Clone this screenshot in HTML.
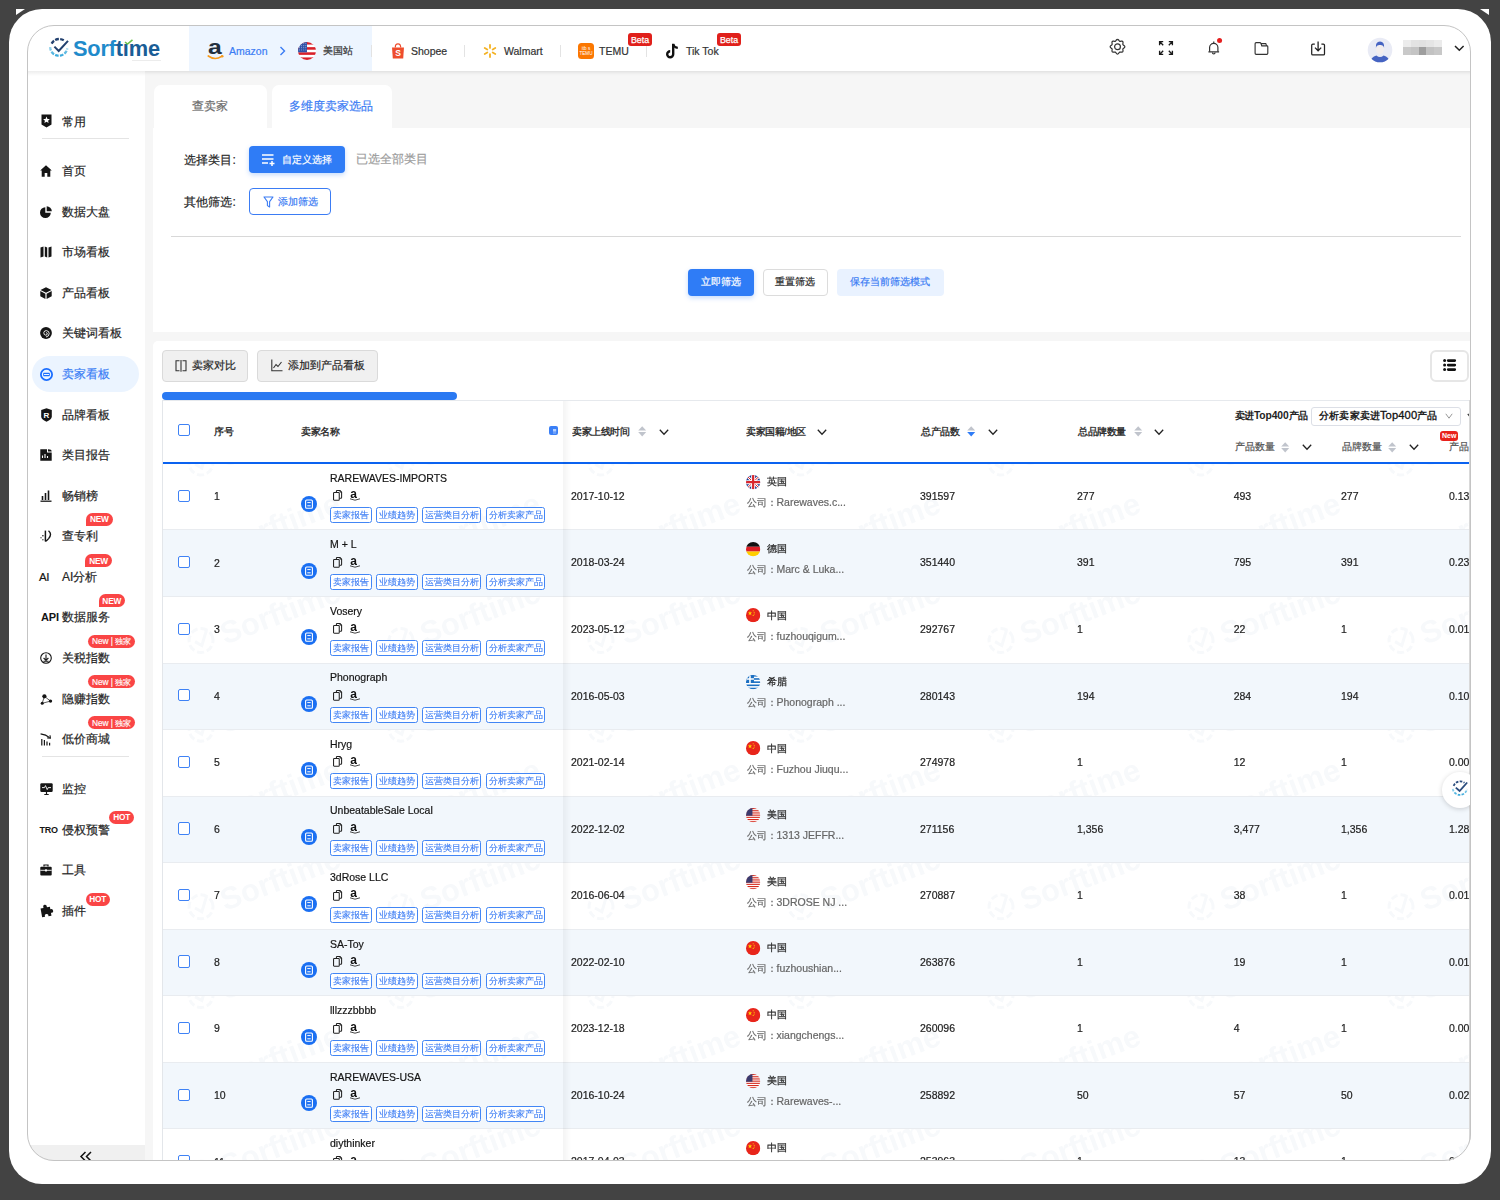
<!DOCTYPE html><html><head><meta charset="utf-8"><style>
*{box-sizing:border-box}
html,body{margin:0;padding:0}
body{width:1500px;height:1200px;background:#434343;position:relative;overflow:hidden;font-family:"Liberation Sans",sans-serif}
.frame{position:absolute;left:9px;top:9px;width:1482px;height:1175px;background:#fff;border-radius:33px}
.clip{position:absolute;left:0;top:0;width:1500px;height:1200px;clip-path:inset(25px 29px 39px 27px round 27px);background:#f6f6f6}
.bord{position:absolute;left:27px;top:25px;width:1444px;height:1136px;border:1px solid #c4c4c4;border-radius:27px;pointer-events:none}
.a{position:absolute}
.t{position:absolute;white-space:nowrap;line-height:14px;-webkit-text-stroke:0.2px currentColor}
svg{position:absolute;overflow:visible}
</style></head><body>
<div class="frame"></div>
<svg style="left:0;top:0" width="1500" height="40"><path d="M16 9 H25 L16 15 Z" fill="#fff"/><path d="M1480 9 H1489 V15 Z" fill="#fff"/></svg>
<div class="clip">
<div class="a" style="left:0px;top:0px;width:1500px;height:71px;background:#fff;box-shadow:0 1px 4px rgba(0,0,0,0.12)"></div>
<div class="a" style="left:189px;top:0px;width:183px;height:71px;background:#edf5ff"></div>
<svg style="left:48px;top:36px" width="22" height="24" viewBox="0 0 22 24">
<defs><linearGradient id="lg1" x1="0" y1="0" x2="0" y2="1"><stop offset="0" stop-color="#9fd6ec"/><stop offset="1" stop-color="#39a9dc"/></linearGradient></defs>
<path d="M3.6 7.6 A8.6 8.6 0 0 1 16.2 4.6" fill="none" stroke="#23416f" stroke-width="2.3" stroke-dasharray="3.8 1.3"/>
<path d="M2.2 11 A8.6 8.6 0 0 0 19.3 12.4" fill="none" stroke="url(#lg1)" stroke-width="2.3" stroke-dasharray="3.6 1.3"/>
<path d="M6.4 10.6 L10.7 15 L20 4.8" fill="none" stroke="#23416f" stroke-width="2" stroke-linecap="butt"/>
</svg>
<div class="t" style="left:73px;top:36px;font-size:21.8px;line-height:26px;color:#333;font-weight:bold;-webkit-text-stroke:0;letter-spacing:-0.2px"><span style="color:#1f8bcb">Sorf</span><span style="color:#1a5d96">t&#305;me</span></div>
<svg style="left:123.5px;top:38.8px" width="9" height="6" viewBox="0 0 9 6"><path d="M1 3 L3.5 5 L8.5 0.8" fill="none" stroke="#6cc04a" stroke-width="1.6"/></svg>
<div class="a" style="left:132px;top:59.6px;width:29px;height:1.3px;background:#ececec"></div>
<div class="t" style="left:207.6px;top:37.3px;font-size:21px;line-height:20px;color:#232f3e;font-weight:bold;-webkit-text-stroke:0;transform:scaleX(1.18);transform-origin:0 0">a</div>
<svg style="left:206px;top:54px" width="19" height="7" viewBox="0 0 19 7"><path d="M2.3 2 Q9 6.8 15.6 2.4" fill="none" stroke="#f79a1c" stroke-width="1.7" stroke-linecap="round"/><circle cx="16.2" cy="2.2" r="1.3" fill="#f79a1c"/></svg>
<div class="t" style="left:229px;top:44px;font-size:10.5px;line-height:14px;color:#3b7cf4;font-weight:normal;">Amazon</div>
<svg style="left:279px;top:46px" width="8" height="10" viewBox="0 0 8 10"><path d="M1.5 1 L5.5 5 L1.5 9" fill="none" stroke="#3b7cf4" stroke-width="1.4"/></svg>
<svg style="left:298px;top:42px" width="18" height="18" viewBox="0 0 18 18"><clipPath id="cUSh"><circle cx="9.0" cy="9.0" r="9.0"/></clipPath><g clip-path="url(#cUSh)"><rect width="18" height="18" fill="#fff"/><rect y="0.00" width="18" height="2.57" fill="#d8202a"/><rect y="5.14" width="18" height="2.57" fill="#d8202a"/><rect y="10.29" width="18" height="2.57" fill="#d8202a"/><rect y="15.43" width="18" height="2.57" fill="#d8202a"/><rect width="9.00" height="10.29" fill="#2f52a8"/><circle cx="1.60" cy="1.60" r="0.45" fill="#fff"/><circle cx="1.60" cy="3.70" r="0.45" fill="#fff"/><circle cx="1.60" cy="5.80" r="0.45" fill="#fff"/><circle cx="1.60" cy="7.90" r="0.45" fill="#fff"/><circle cx="3.70" cy="1.60" r="0.45" fill="#fff"/><circle cx="3.70" cy="3.70" r="0.45" fill="#fff"/><circle cx="3.70" cy="5.80" r="0.45" fill="#fff"/><circle cx="3.70" cy="7.90" r="0.45" fill="#fff"/><circle cx="5.80" cy="1.60" r="0.45" fill="#fff"/><circle cx="5.80" cy="3.70" r="0.45" fill="#fff"/><circle cx="5.80" cy="5.80" r="0.45" fill="#fff"/><circle cx="5.80" cy="7.90" r="0.45" fill="#fff"/><circle cx="7.90" cy="1.60" r="0.45" fill="#fff"/><circle cx="7.90" cy="3.70" r="0.45" fill="#fff"/><circle cx="7.90" cy="5.80" r="0.45" fill="#fff"/><circle cx="7.90" cy="7.90" r="0.45" fill="#fff"/></g></svg>
<div class="t" style="left:322.5px;top:44px;font-size:10px;line-height:14px;color:#333;font-weight:normal;">美国站</div>
<div class="a" style="left:371px;top:45px;width:1px;height:12px;background:#e3e3e3"></div>
<div class="a" style="left:463.5px;top:45px;width:1px;height:12px;background:#e3e3e3"></div>
<div class="a" style="left:559.6px;top:45px;width:1px;height:12px;background:#e3e3e3"></div>
<div class="a" style="left:646px;top:45px;width:1px;height:12px;background:#e3e3e3"></div>
<svg style="left:391px;top:43px" width="14" height="16" viewBox="0 0 14 16"><path d="M1 4.5 H13 L12.2 15.5 H1.8 Z" fill="#ee4d2d"/><path d="M4.3 4.5 Q4.3 0.8 7 0.8 Q9.7 0.8 9.7 4.5" fill="none" stroke="#ee4d2d" stroke-width="1.2"/><text x="7" y="13.2" font-size="8.5" font-family="Liberation Sans" font-weight="bold" fill="#fff" text-anchor="middle">S</text></svg>
<div class="t" style="left:411px;top:44px;font-size:10.5px;line-height:14px;color:#333;font-weight:normal;">Shopee</div>
<svg style="left:483px;top:44px" width="14" height="14" viewBox="0 0 14 14"><rect x="6.1" y="0" width="1.8" height="4.8" rx="0.9" fill="#f4b223" transform="rotate(0 7 7)"/><rect x="6.1" y="0" width="1.8" height="4.8" rx="0.9" fill="#f4b223" transform="rotate(60 7 7)"/><rect x="6.1" y="0" width="1.8" height="4.8" rx="0.9" fill="#f4b223" transform="rotate(120 7 7)"/><rect x="6.1" y="0" width="1.8" height="4.8" rx="0.9" fill="#f4b223" transform="rotate(180 7 7)"/><rect x="6.1" y="0" width="1.8" height="4.8" rx="0.9" fill="#f4b223" transform="rotate(240 7 7)"/><rect x="6.1" y="0" width="1.8" height="4.8" rx="0.9" fill="#f4b223" transform="rotate(300 7 7)"/></svg>
<div class="t" style="left:504px;top:44px;font-size:10.5px;line-height:14px;color:#333;font-weight:normal;">Walmart</div>
<svg style="left:578px;top:43px" width="16" height="16" viewBox="0 0 16 16"><rect width="16" height="16" rx="3.5" fill="#fb7701"/><text x="8" y="7.2" font-size="4.6" font-family="Liberation Sans" fill="#fff" text-anchor="middle">itb s</text><text x="8" y="12" font-size="4.6" font-family="Liberation Sans" fill="#fff" text-anchor="middle">TEMU</text></svg>
<div class="t" style="left:599px;top:44px;font-size:10.5px;line-height:14px;color:#333;font-weight:normal;">TEMU</div>
<div class="a" style="left:628px;top:33px;width:24px;height:12.7px;background:#e0201b;border-radius:3px"></div>
<div class="t" style="left:628px;top:32.5px;font-size:8.8px;line-height:14px;color:#fff;font-weight:normal;width:24px;text-align:center;-webkit-text-stroke:0.25px #fff">Beta</div>
<svg style="left:665px;top:43px" width="15" height="16" viewBox="0 0 15 16"><path d="M8.2 0.8 V11.2 A3 3 0 1 1 5.2 8.2" fill="none" stroke="#111" stroke-width="2.4"/><path d="M8.2 1.2 Q9 4.4 12.8 4.8" fill="none" stroke="#111" stroke-width="2.2"/></svg>
<div class="t" style="left:686px;top:44px;font-size:10.5px;line-height:14px;color:#333;font-weight:normal;">Tik Tok</div>
<div class="a" style="left:717px;top:33px;width:24px;height:12.7px;background:#e0201b;border-radius:3px"></div>
<div class="t" style="left:717px;top:32.5px;font-size:8.8px;line-height:14px;color:#fff;font-weight:normal;width:24px;text-align:center;-webkit-text-stroke:0.25px #fff">Beta</div>
<svg style="left:1110px;top:39px" width="16" height="16" viewBox="0 0 16 16"><polyline points="7.50,0.35 8.20,0.60 8.79,1.23 9.26,1.89 9.74,2.30 10.36,2.35 11.17,2.21 12.02,2.19 12.70,2.50 13.01,3.18 12.99,4.03 12.85,4.84 12.90,5.46 13.31,5.94 13.97,6.41 14.60,7.00 14.85,7.70 14.60,8.40 13.97,8.99 13.31,9.46 12.90,9.94 12.85,10.56 12.99,11.37 13.01,12.22 12.70,12.90 12.02,13.21 11.17,13.19 10.36,13.05 9.74,13.10 9.26,13.51 8.79,14.17 8.20,14.80 7.50,15.05 6.80,14.80 6.21,14.17 5.74,13.51 5.26,13.10 4.64,13.05 3.83,13.19 2.98,13.21 2.30,12.90 1.99,12.22 2.01,11.37 2.15,10.56 2.10,9.94 1.69,9.46 1.03,8.99 0.40,8.40 0.15,7.70 0.40,7.00 1.03,6.41 1.69,5.94 2.10,5.46 2.15,4.84 2.01,4.03 1.99,3.18 2.30,2.50 2.98,2.19 3.83,2.21 4.64,2.35 5.26,2.30 5.74,1.89 6.21,1.23 6.80,0.60 7.50,0.35" fill="none" stroke="#333" stroke-width="1.2"/><circle cx="7.5" cy="7.7" r="2.9" fill="none" stroke="#333" stroke-width="1.2"/></svg>
<svg style="left:1158.5px;top:41px" width="14" height="14" viewBox="0 0 14 14"><path d="M0.6 4.2 V0.6 H4.2 M0.6 0.6 L4.2 4.2 M9.8 0.6 H13.4 V4.2 M13.4 0.6 L9.8 4.2 M0.6 9.8 V13.4 H4.2 M0.6 13.4 L4.2 9.8 M13.4 9.8 V13.4 H9.8 M13.4 13.4 L9.8 9.8" fill="none" stroke="#1a1a1a" stroke-width="1.35"/></svg>
<svg style="left:1208px;top:40.5px" width="11.5" height="14.5" viewBox="0 0 11.5 14.5"><path d="M1.6 10.8 V6.5 A4.15 4.15 0 0 1 9.9 6.5 V10.8" fill="none" stroke="#333" stroke-width="1.2"/><path d="M0.4 10.9 H11.1" stroke="#333" stroke-width="1.3"/><path d="M4.4 11.6 A1.35 1.35 0 0 0 7.1 11.6" fill="none" stroke="#333" stroke-width="1.1"/><path d="M5.75 0.4 V2.4" stroke="#333" stroke-width="1.2"/></svg>
<svg style="left:1216.5px;top:37.6px" width="5" height="5" viewBox="0 0 5 5"><circle cx="2.55" cy="2.6" r="2.5" fill="#e41e1e"/></svg>
<svg style="left:1254px;top:41.5px" width="15" height="13" viewBox="0 0 15 13"><path d="M1.1 1.7 Q1.1 0.6 2.2 0.6 H5.9 Q6.6 0.6 6.9 1.3 L7.8 3.9 H13 Q13.8 3.9 13.8 4.8 V11.3 Q13.8 12.3 12.8 12.3 H2.1 Q1.1 12.3 1.1 11.3 Z" fill="none" stroke="#333" stroke-width="1.15"/><path d="M6.9 1.6 H11.8 L12.6 3.9" fill="none" stroke="#333" stroke-width="1.1"/></svg>
<svg style="left:1311px;top:40.5px" width="15" height="15" viewBox="0 0 15 15"><path d="M3.8 3 H1.9 Q0.7 3 0.7 4.2 V12.9 Q0.7 13.9 1.9 13.9 H12.4 Q13.5 13.9 13.5 12.9 V4.2 Q13.5 3 12.4 3 H10.4" fill="none" stroke="#222" stroke-width="1.25"/><path d="M7.1 0.4 V9.6 M4 6.6 L7.1 9.8 L10.2 6.6" fill="none" stroke="#222" stroke-width="1.3"/></svg>
<svg style="left:1367px;top:37px" width="26" height="26" viewBox="0 0 26 26"><clipPath id="cav"><circle cx="13" cy="13" r="12.3"/></clipPath><circle cx="13" cy="13" r="12.3" fill="#e9ebf5"/>
<g clip-path="url(#cav)"><ellipse cx="13" cy="12.3" rx="3.9" ry="4.9" fill="#f2eded"/><path d="M8.9 11 Q8.3 4.6 13 4.5 Q17.7 4.6 17.1 11 Q16.6 7.8 13 8 Q9.4 7.8 8.9 11Z" fill="#4563c2"/>
<path d="M3 27 Q3.5 19.8 9.4 18.6 Q13 21.6 16.6 18.6 Q22.5 19.8 23 27 Z" fill="#4563c2"/></g></svg>
<div class="a" style="left:1403.0px;top:40px;width:7.8px;height:7px;background:#ececec"></div>
<div class="a" style="left:1403.0px;top:47px;width:7.8px;height:7.5px;background:#c9c9c9"></div>
<div class="a" style="left:1410.8px;top:40px;width:7.8px;height:7px;background:#e3e3e3"></div>
<div class="a" style="left:1410.8px;top:47px;width:7.8px;height:7.5px;background:#c4c4c4"></div>
<div class="a" style="left:1418.6px;top:40px;width:7.8px;height:7px;background:#e1e1e1"></div>
<div class="a" style="left:1418.6px;top:47px;width:7.8px;height:7.5px;background:#9e9e9e"></div>
<div class="a" style="left:1426.4px;top:40px;width:7.8px;height:7px;background:#e5e5e5"></div>
<div class="a" style="left:1426.4px;top:47px;width:7.8px;height:7.5px;background:#c2c2c2"></div>
<div class="a" style="left:1434.2px;top:40px;width:7.8px;height:7px;background:#ebebeb"></div>
<div class="a" style="left:1434.2px;top:47px;width:7.8px;height:7.5px;background:#c8c8c8"></div>
<svg style="left:1454px;top:45px" width="11" height="7" viewBox="0 0 11 7"><path d="M1 1 L5.3 5.3 L9.6 1" fill="none" stroke="#222" stroke-width="1.5"/></svg>
<div class="a" style="left:0px;top:71px;width:145px;height:1129px;background:#fff"></div>
<div class="a" style="left:0px;top:1145px;width:145px;height:20px;background:#f0f0f0"></div>
<div class="a" style="left:0px;top:71px;width:145px;height:5px;background:linear-gradient(rgba(0,0,0,0.07),rgba(0,0,0,0))"></div>
<svg style="left:79px;top:1151px" width="14" height="10" viewBox="0 0 14 10"><path d="M6.5 1 L2 5.5 L6.5 10 M12 1 L7.5 5.5 L12 10" fill="none" stroke="#111" stroke-width="1.5"/></svg>
<div class="a" style="left:42px;top:137.5px;width:87px;height:1px;background:#e4e4e4"></div>
<div class="a" style="left:42px;top:756px;width:87px;height:1px;background:#e4e4e4"></div>
<div class="a" style="left:32px;top:356px;width:107px;height:36px;background:#ebf4ff;border-radius:18px"></div>
<div class="t" style="left:62px;top:114.7px;font-size:12px;line-height:14px;color:#262626;font-weight:normal;">常用</div>
<svg style="left:40.5px;top:114.2px" width="11" height="14" viewBox="0 0 11 14"><path d="M0.5 0.5 H10.5 V10.5 L5.5 13.5 L0.5 10.5 Z" fill="#151515"/><path d="M5.5 2.6 L6.5 4.9 L8.9 5.1 L7.1 6.7 L7.6 9.1 L5.5 7.8 L3.4 9.1 L3.9 6.7 L2.1 5.1 L4.5 4.9 Z" fill="#fff"/></svg>
<div class="t" style="left:62px;top:164.25px;font-size:12px;line-height:14px;color:#262626;font-weight:normal;">首页</div>
<svg style="left:40px;top:165.25px" width="12" height="12" viewBox="0 0 12 12"><path d="M6 0.3 L11.8 5.6 H10.3 V11.7 H7.3 V8 H4.7 V11.7 H1.7 V5.6 H0.2 Z" fill="#151515"/></svg>
<div class="t" style="left:62px;top:204.81px;font-size:12px;line-height:14px;color:#262626;font-weight:normal;">数据大盘</div>
<svg style="left:40px;top:205.81px" width="12" height="12" viewBox="0 0 12 12"><path d="M5.3 1.2 A5.4 5.4 0 1 0 10.8 6.7 H5.3 Z" fill="#151515"/><path d="M6.7 0.2 A5.3 5.3 0 0 1 11.8 5.3 H6.7 Z" fill="#151515"/></svg>
<div class="t" style="left:62px;top:245.37px;font-size:12px;line-height:14px;color:#262626;font-weight:normal;">市场看板</div>
<svg style="left:40px;top:246.37px" width="12" height="12" viewBox="0 0 12 12"><path d="M0.5 1.5 L3.5 0.5 V10.5 L0.5 11.5 Z M4.8 0.5 L7.2 1.5 V11.5 L4.8 10.5 Z M8.5 1.5 L11.5 0.5 V10.5 L8.5 11.5 Z" fill="#151515"/></svg>
<div class="t" style="left:62px;top:285.93px;font-size:12px;line-height:14px;color:#262626;font-weight:normal;">产品看板</div>
<svg style="left:40px;top:286.93px" width="12" height="12" viewBox="0 0 12 12"><path d="M6 0.3 L11.5 3 L6 5.8 L0.5 3 Z" fill="#151515"/><path d="M0.3 4 L5.4 6.7 V11.9 L0.3 9.2 Z M11.7 4 L6.6 6.7 V11.9 L11.7 9.2 Z" fill="#151515"/></svg>
<div class="t" style="left:62px;top:326.49px;font-size:12px;line-height:14px;color:#262626;font-weight:normal;">关键词看板</div>
<svg style="left:40px;top:327.49px" width="12" height="12" viewBox="0 0 12 12"><circle cx="6" cy="6" r="5.9" fill="#151515"/><path d="M6 6.2 Q6.6 5.2 7.2 6.2 Q7.6 8 5.8 8.2 Q3.6 8 3.8 5.6 Q4.2 3.4 6.4 3.6 Q9.2 4 9.2 6.6 Q9 9.6 6 10" fill="none" stroke="#fff" stroke-width="0.9"/></svg>
<div class="t" style="left:62px;top:367.05px;font-size:12px;line-height:14px;color:#3a7df5;font-weight:normal;">卖家看板</div>
<svg style="left:40px;top:367.75px" width="13" height="13" viewBox="0 0 13 13"><circle cx="6.5" cy="6.5" r="5.6" fill="none" stroke="#1a6dff" stroke-width="1.8"/><rect x="3.2" y="4.8" width="6.6" height="3.4" rx="0.6" fill="#1a6dff"/><rect x="4" y="6" width="5" height="1" fill="#ebf4ff"/></svg>
<div class="t" style="left:62px;top:407.61px;font-size:12px;line-height:14px;color:#262626;font-weight:normal;">品牌看板</div>
<svg style="left:40.5px;top:407.61px" width="11" height="14" viewBox="0 0 11 14"><path d="M5.5 0.3 L10.8 2 V8.5 Q10.8 11.5 5.5 13.7 Q0.2 11.5 0.2 8.5 V2 Z" fill="#151515"/><text x="5.5" y="10.2" font-size="8" font-weight="bold" font-family="Liberation Sans" fill="#fff" text-anchor="middle">R</text></svg>
<div class="t" style="left:62px;top:448.17px;font-size:12px;line-height:14px;color:#262626;font-weight:normal;">类目报告</div>
<svg style="left:40px;top:449.17px" width="12" height="12" viewBox="0 0 12 12"><path d="M0.3 0.3 H7 V3.5 H11.7 V11.7 H0.3 Z" fill="#151515"/><path d="M8 0.3 Q11.7 0.3 11.7 2.6 H8 Z" fill="#151515"/><path d="M2.5 9 V6.5 M5 9 V5 M7.5 9 V7" stroke="#fff" stroke-width="1.1"/></svg>
<div class="t" style="left:62px;top:488.73px;font-size:12px;line-height:14px;color:#262626;font-weight:normal;">畅销榜</div>
<svg style="left:40px;top:489.73px" width="12" height="12" viewBox="0 0 12 12"><path d="M0.5 11.2 H11.5" stroke="#151515" stroke-width="1.3"/><path d="M2.5 10 V6 M5.5 10 V3 M8.5 10 V0.5" stroke="#151515" stroke-width="1.6"/></svg>
<div class="t" style="left:62px;top:529.29px;font-size:12px;line-height:14px;color:#262626;font-weight:normal;">查专利</div>
<svg style="left:39.5px;top:530.29px" width="14" height="12" viewBox="0 0 14 12"><path d="M5.4 0.6 V11.4" stroke="#151515" stroke-width="1.5"/><path d="M8.5 0.8 Q12.5 4 8.6 8.6 Q7 10.4 5.4 11.4" fill="none" stroke="#151515" stroke-width="1.4"/><circle cx="2.9" cy="5.7" r="0.8" fill="#151515"/><circle cx="1" cy="7.8" r="0.75" fill="#151515" opacity="0.7"/><circle cx="2.9" cy="9.8" r="0.75" fill="#151515" opacity="0.8"/></svg>
<div class="t" style="left:62px;top:569.85px;font-size:12px;line-height:14px;color:#262626;font-weight:normal;">AI分析</div>
<div class="t" style="left:39px;top:569.85px;font-size:11.5px;line-height:14px;color:#151515;font-weight:normal;letter-spacing:-0.5px">AI</div>
<div class="t" style="left:62px;top:610.41px;font-size:12px;line-height:14px;color:#262626;font-weight:normal;margin-left:0">数据服务</div>
<div class="t" style="left:41px;top:610.41px;font-size:11px;line-height:14px;color:#151515;font-weight:bold;-webkit-text-stroke:0;letter-spacing:-0.2px">API</div>
<div class="t" style="left:62px;top:650.97px;font-size:12px;line-height:14px;color:#262626;font-weight:normal;">关税指数</div>
<svg style="left:40px;top:651.97px" width="12" height="12" viewBox="0 0 12 12"><circle cx="6" cy="6" r="5.3" fill="none" stroke="#151515" stroke-width="1.1"/><path d="M6 2.5 V8 M3.6 6 L6 8.3 L8.4 6 M3.5 9.3 H8.5" fill="none" stroke="#151515" stroke-width="1.1"/></svg>
<div class="t" style="left:62px;top:691.53px;font-size:12px;line-height:14px;color:#262626;font-weight:normal;">隐赚指数</div>
<svg style="left:39.5px;top:692.03px" width="13" height="13" viewBox="0 0 13 13"><path d="M4.4 4.3 L2.2 11.3 L10.5 9.1 Z" fill="none" stroke="#151515" stroke-width="0.7"/><circle cx="4.4" cy="4.3" r="2.1" fill="#151515"/><circle cx="2.2" cy="11.3" r="1.5" fill="#151515"/><circle cx="10.5" cy="9.1" r="1.7" fill="#151515"/></svg>
<div class="t" style="left:62px;top:732.09px;font-size:12px;line-height:14px;color:#262626;font-weight:normal;">低价商城</div>
<svg style="left:40px;top:733.09px" width="12" height="13" viewBox="0 0 12 13"><path d="M1.8 12.5 V6 M4.4 12.5 V7 M7 12.5 V8.5 M9.6 12.5 V9.8" stroke="#151515" stroke-width="1.2"/><path d="M0.6 0.8 Q6 1.4 9.6 4.6" fill="none" stroke="#151515" stroke-width="1.2"/><path d="M7.2 4.9 L10.4 5.2 L10 2.2" fill="none" stroke="#151515" stroke-width="1.1"/></svg>
<div class="t" style="left:62px;top:782.1px;font-size:12px;line-height:14px;color:#262626;font-weight:normal;">监控</div>
<svg style="left:39.5px;top:783.1px" width="13" height="12" viewBox="0 0 13 12"><rect x="0.3" y="0.3" width="12.4" height="8.6" rx="1.2" fill="#151515"/><path d="M4.3 11.5 H8.7 M6.5 9 V11.5" stroke="#151515" stroke-width="1.2"/><path d="M2 4.6 H4.5 L5.5 2.6 L7.2 6.6 L8.2 4.6 H11" fill="none" stroke="#fff" stroke-width="0.9"/></svg>
<div class="t" style="left:62px;top:822.66px;font-size:12px;line-height:14px;color:#262626;font-weight:normal;">侵权预警</div>
<div class="t" style="left:39.5px;top:822.66px;font-size:9px;line-height:14px;color:#151515;font-weight:bold;-webkit-text-stroke:0;letter-spacing:-0.3px">TRO</div>
<div class="t" style="left:62px;top:863.22px;font-size:12px;line-height:14px;color:#262626;font-weight:normal;">工具</div>
<svg style="left:40px;top:864.22px" width="12" height="12" viewBox="0 0 12 12"><path d="M4 2.5 V1 H8 V2.5" fill="none" stroke="#151515" stroke-width="1.2"/><rect x="0.3" y="2.8" width="11.4" height="8.7" rx="1" fill="#151515"/><path d="M0.3 6.3 H11.7" stroke="#fff" stroke-width="0.9"/><rect x="5" y="5.4" width="2" height="2" fill="#fff"/></svg>
<div class="t" style="left:62px;top:903.78px;font-size:12px;line-height:14px;color:#262626;font-weight:normal;">插件</div>
<svg style="left:40px;top:904.28px" width="13" height="13" viewBox="0 0 13 13"><path d="M1 3.5 H4 Q3.5 0.5 5.8 0.5 Q8 0.5 7.5 3.5 H10.5 V6 Q13 5.5 13 7.8 Q13 10 10.5 9.5 V12.5 H7.5 Q8 10 5.8 10 Q3.5 10 4 12.5 H1 Z" fill="#151515" transform="rotate(-10 6.5 6.5)"/></svg>
<div class="a" style="left:86px;top:513px;width:26.7px;height:12.9px;background:#fa4545;border-radius:6.45px 6.45px 6.45px 0"></div>
<div class="t" style="left:86px;top:512.45px;font-size:8.3px;line-height:14px;color:#fff;font-weight:bold;-webkit-text-stroke:0;width:26.7px;text-align:center;letter-spacing:-0.2px">NEW</div>
<div class="a" style="left:85.2px;top:554.2px;width:26.7px;height:12.9px;background:#fa4545;border-radius:6.45px 6.45px 6.45px 0"></div>
<div class="t" style="left:85.2px;top:553.6500000000001px;font-size:8.3px;line-height:14px;color:#fff;font-weight:bold;-webkit-text-stroke:0;width:26.7px;text-align:center;letter-spacing:-0.2px">NEW</div>
<div class="a" style="left:98.5px;top:594.3px;width:26.5px;height:12.9px;background:#fa4545;border-radius:6.45px 6.45px 6.45px 0"></div>
<div class="t" style="left:98.5px;top:593.75px;font-size:8.3px;line-height:14px;color:#fff;font-weight:bold;-webkit-text-stroke:0;width:26.5px;text-align:center;letter-spacing:-0.2px">NEW</div>
<div class="a" style="left:87.8px;top:634.8px;width:47.4px;height:13px;background:#fa4545;border-radius:6.5px"></div>
<div class="t" style="left:87.8px;top:634.3px;font-size:8.4px;line-height:14px;color:#fff;font-weight:normal;width:47.4px;text-align:center;letter-spacing:-0.1px;-webkit-text-stroke:0.15px #fff">New | 独家</div>
<div class="a" style="left:87.8px;top:675.4px;width:47.4px;height:13px;background:#fa4545;border-radius:6.5px"></div>
<div class="t" style="left:87.8px;top:674.9px;font-size:8.4px;line-height:14px;color:#fff;font-weight:normal;width:47.4px;text-align:center;letter-spacing:-0.1px;-webkit-text-stroke:0.15px #fff">New | 独家</div>
<div class="a" style="left:87.8px;top:716px;width:47.4px;height:13px;background:#fa4545;border-radius:6.5px"></div>
<div class="t" style="left:87.8px;top:715.5px;font-size:8.4px;line-height:14px;color:#fff;font-weight:normal;width:47.4px;text-align:center;letter-spacing:-0.1px;-webkit-text-stroke:0.15px #fff">New | 独家</div>
<div class="a" style="left:109.4px;top:810.8px;width:24.4px;height:13px;background:#fa4545;border-radius:6.5px 6.5px 6.5px 6.5px"></div>
<div class="t" style="left:109.4px;top:810.3px;font-size:8.3px;line-height:14px;color:#fff;font-weight:bold;-webkit-text-stroke:0;width:24.4px;text-align:center;letter-spacing:-0.2px">HOT</div>
<div class="a" style="left:85.5px;top:892.6px;width:24.4px;height:13px;background:#fa4545;border-radius:6.5px 6.5px 6.5px 6.5px"></div>
<div class="t" style="left:85.5px;top:892.1px;font-size:8.3px;line-height:14px;color:#fff;font-weight:bold;-webkit-text-stroke:0;width:24.4px;text-align:center;letter-spacing:-0.2px">HOT</div>
<div class="a" style="left:153.5px;top:85px;width:113.5px;height:50px;background:#fff;border-radius:7px 7px 0 0"></div>
<div class="a" style="left:271.5px;top:85px;width:120.5px;height:50px;background:#fff;border-radius:7px 7px 0 0"></div>
<div class="a" style="left:153px;top:128px;width:1330px;height:204px;background:#fff"></div>
<div class="t" style="left:192px;top:99.4px;font-size:12px;line-height:14px;color:#6b6b6b;font-weight:normal;">查卖家</div>
<div class="t" style="left:289.4px;top:99.4px;font-size:12px;line-height:14px;color:#3b7cf4;font-weight:normal;">多维度卖家选品</div>
<div class="t" style="left:184.4px;top:153px;font-size:12px;line-height:14px;color:#262626;font-weight:normal;">选择类目:</div>
<div class="a" style="left:249.4px;top:146px;width:96px;height:27px;background:#2f7cf6;border-radius:4px;box-shadow:0 2px 5px rgba(47,124,246,0.28)"></div>
<svg style="left:261px;top:152.5px" width="15" height="14" viewBox="0 0 15 14"><path d="M1 2 H12.5 M1 6 H12.5 M1 10 H7" stroke="#fff" stroke-width="1.5"/><path d="M11 8 V13 M8.5 10.5 H13.5" stroke="#fff" stroke-width="1.5"/></svg>
<div class="t" style="left:282.4px;top:152.5px;font-size:10px;line-height:14px;color:#fff;font-weight:normal;-webkit-text-stroke:0.2px #fff">自定义选择</div>
<div class="t" style="left:355.6px;top:151.6px;font-size:12px;line-height:14px;color:#9c9c9c;font-weight:normal;">已选全部类目</div>
<div class="t" style="left:184.4px;top:195px;font-size:12px;line-height:14px;color:#262626;font-weight:normal;">其他筛选:</div>
<div class="a" style="left:249.4px;top:188.4px;width:81.2px;height:27px;border:1px solid #3b7cf4;border-radius:4px;background:#fff"></div>
<svg style="left:262.5px;top:195.5px" width="11" height="12" viewBox="0 0 11 12"><path d="M1 1 H10 L6.6 5.6 V11 L4.4 9.6 V5.6 Z" fill="none" stroke="#3b7cf4" stroke-width="1.1" stroke-linejoin="round"/></svg>
<div class="t" style="left:278px;top:195px;font-size:10px;line-height:14px;color:#3b7cf4;font-weight:normal;">添加筛选</div>
<div class="a" style="left:171px;top:236px;width:1290px;height:1px;background:#d8d8d8"></div>
<div class="a" style="left:688.4px;top:268.6px;width:65.2px;height:27px;background:#2f7cf6;border-radius:4px;box-shadow:0 2px 5px rgba(47,124,246,0.28)"></div>
<div class="t" style="left:688.4px;top:275px;font-size:10px;line-height:14px;color:#fff;font-weight:normal;width:65.2px;text-align:center;-webkit-text-stroke:0.2px #fff">立即筛选</div>
<div class="a" style="left:762.6px;top:268.6px;width:65px;height:27px;background:#fff;border:1px solid #dcdcdc;border-radius:4px"></div>
<div class="t" style="left:762.6px;top:275px;font-size:10px;line-height:14px;color:#262626;font-weight:normal;width:65px;text-align:center">重置筛选</div>
<div class="a" style="left:836.6px;top:268.6px;width:107.4px;height:27px;background:#e9f2ff;border-radius:4px"></div>
<div class="t" style="left:836.6px;top:275px;font-size:10px;line-height:14px;color:#3b7cf4;font-weight:normal;width:107.4px;text-align:center">保存当前筛选模式</div>
<div class="a" style="left:153px;top:340.5px;width:1330px;height:900px;background:#fff;border-radius:5px 0 0 0"></div>
<div class="a" style="left:162px;top:350px;width:86.3px;height:32px;background:#f0f0f0;border:1px solid #dadada;border-radius:4px"></div>
<svg style="left:175px;top:360px" width="12" height="12" viewBox="0 0 12 12"><path d="M4.5 0.8 H1 V10.8 H4.5 M7.5 0.8 H11 V10.8 H7.5 M6 0 V11.8" fill="none" stroke="#333" stroke-width="1.1"/></svg>
<div class="t" style="left:192px;top:358px;font-size:11px;line-height:14px;color:#262626;font-weight:normal;">卖家对比</div>
<div class="a" style="left:257.4px;top:350px;width:120.3px;height:32px;background:#f0f0f0;border:1px solid #dadada;border-radius:4px"></div>
<svg style="left:271px;top:359px" width="12" height="13" viewBox="0 0 12 13"><path d="M0.8 0.5 V11.8 H11.5" fill="none" stroke="#333" stroke-width="1.1"/><path d="M2.5 9 L5 5.5 L7 7.5 L10.5 3" fill="none" stroke="#333" stroke-width="1.1"/></svg>
<div class="t" style="left:287.5px;top:358px;font-size:11px;line-height:14px;color:#262626;font-weight:normal;">添加到产品看板</div>
<div class="a" style="left:1430.4px;top:350px;width:39px;height:32px;background:#fff;border:2px solid #e6e6e6;border-radius:6px"></div>
<svg style="left:1443px;top:358.5px" width="14" height="13" viewBox="0 0 14 13"><circle cx="1.6" cy="1.6" r="1.5" fill="#111"/><circle cx="1.6" cy="6.1" r="1.5" fill="#111"/><circle cx="1.6" cy="10.6" r="1.5" fill="#111"/><path d="M5.2 1.6 H11.8 M5.2 6.1 H11.8 M5.2 10.6 H11.8" stroke="#111" stroke-width="2.6" stroke-linecap="round"/></svg>
<div class="a" style="left:0;top:0;width:1469.5px;height:1200px;overflow:hidden">
<div class="a" style="left:162.5px;top:399.5px;width:1307.0px;height:1px;background:#e6e9ed"></div>
<div class="a" style="left:162px;top:392.3px;width:295px;height:7.7px;background:#2a79f2;border-radius:4px"></div>
<div class="a" style="left:162.0px;top:400px;width:1px;height:800px;background:#e3e6ea"></div>
<div class="a" style="left:162.5px;top:400.5px;width:1307.0px;height:61.5px;background:#fff"></div>
<div class="a" style="left:178px;top:424.2px;width:12.2px;height:12.2px;background:#fff;border:1px solid #3f82f5;border-radius:2px"></div>
<div class="t" style="left:213.5px;top:425.2px;font-size:10px;line-height:14px;color:#333;font-weight:bold;-webkit-text-stroke:0;transform:scale(0.955);transform-origin:0 50%">序号</div>
<div class="t" style="left:301px;top:425.2px;font-size:10px;line-height:14px;color:#333;font-weight:bold;-webkit-text-stroke:0;transform:scale(0.955);transform-origin:0 50%">卖家名称</div>
<svg style="left:549px;top:425.7px" width="9" height="9" viewBox="0 0 9 9"><rect width="9" height="9" rx="2" fill="#3a7ff6"/><rect x="4" y="3" width="3.2" height="2.6" fill="#b8d3ff"/><path d="M4 7 H7.2" stroke="#b8d3ff" stroke-width="0.8"/></svg>
<div class="t" style="left:571.5px;top:425.2px;font-size:10px;line-height:14px;color:#333;font-weight:bold;-webkit-text-stroke:0;transform:scale(0.955);transform-origin:0 50%">卖家上线时间</div>
<svg style="left:637.5px;top:426.2px" width="8.4" height="10.6" viewBox="0 0 8.4 10.6"><path d="M4.2 0.2 L8.2 4.6 H0.2 Z" fill="#c0c4cc"/><path d="M4.2 10.4 L8.2 6 H0.2 Z" fill="#c0c4cc"/></svg>
<svg style="left:658.6px;top:428.5px" width="10" height="6" viewBox="0 0 10 6"><path d="M0.8 0.8 L5.0 5.2 L9.2 0.8" fill="none" stroke="#222" stroke-width="1.3"/></svg>
<div class="t" style="left:746.2px;top:425.2px;font-size:10px;line-height:14px;color:#333;font-weight:bold;-webkit-text-stroke:0;transform:scale(0.955);transform-origin:0 50%">卖家国籍/地区</div>
<svg style="left:817.4px;top:428.5px" width="10" height="6" viewBox="0 0 10 6"><path d="M0.8 0.8 L5.0 5.2 L9.2 0.8" fill="none" stroke="#222" stroke-width="1.3"/></svg>
<div class="t" style="left:921px;top:425.2px;font-size:10px;line-height:14px;color:#333;font-weight:bold;-webkit-text-stroke:0;transform:scale(0.955);transform-origin:0 50%">总产品数</div>
<svg style="left:967px;top:426.2px" width="8.4" height="10.6" viewBox="0 0 8.4 10.6"><path d="M4.2 0.2 L8.2 4.6 H0.2 Z" fill="#c0c4cc"/><path d="M4.2 10.4 L8.2 6 H0.2 Z" fill="#2f7cf6"/></svg>
<svg style="left:988px;top:428.5px" width="10" height="6" viewBox="0 0 10 6"><path d="M0.8 0.8 L5.0 5.2 L9.2 0.8" fill="none" stroke="#222" stroke-width="1.3"/></svg>
<div class="t" style="left:1078px;top:425.2px;font-size:10px;line-height:14px;color:#333;font-weight:bold;-webkit-text-stroke:0;transform:scale(0.955);transform-origin:0 50%">总品牌数量</div>
<svg style="left:1133.6px;top:426.2px" width="8.4" height="10.6" viewBox="0 0 8.4 10.6"><path d="M4.2 0.2 L8.2 4.6 H0.2 Z" fill="#c0c4cc"/><path d="M4.2 10.4 L8.2 6 H0.2 Z" fill="#c0c4cc"/></svg>
<svg style="left:1154.4px;top:428.5px" width="10" height="6" viewBox="0 0 10 6"><path d="M0.8 0.8 L5.0 5.2 L9.2 0.8" fill="none" stroke="#222" stroke-width="1.3"/></svg>
<div class="t" style="left:1234.5px;top:409px;font-size:10px;line-height:14px;color:#222;font-weight:bold;-webkit-text-stroke:0;letter-spacing:-0.3px">卖进<span style="font-size:10.3px;letter-spacing:-0.1px">Top400</span>产品</div>
<div class="a" style="left:1311.4px;top:407px;width:149.4px;height:19.4px;background:#fff;border:1px solid #dcdfe6;border-radius:3px"></div>
<div class="t" style="left:1319.3px;top:408px;font-size:10px;line-height:14px;color:#222;font-weight:bold;-webkit-text-stroke:0;letter-spacing:0.1px">分析卖家卖进<span style="font-size:11.2px;font-weight:normal;color:#111;-webkit-text-stroke:0.3px #111">Top400</span>产品</div>
<svg style="left:1444.5px;top:413px" width="8" height="6" viewBox="0 0 8 6"><path d="M0.8 0.8 L4.0 5.2 L7.2 0.8" fill="none" stroke="#999" stroke-width="1"/></svg>
<svg style="left:1466.5px;top:413px" width="8" height="6" viewBox="0 0 8 6"><path d="M0.8 0.8 L4.0 5.2 L7.2 0.8" fill="none" stroke="#333" stroke-width="1.2"/></svg>
<div class="t" style="left:1234.5px;top:440.3px;font-size:10px;line-height:14px;color:#555;font-weight:normal;">产品数量</div>
<svg style="left:1281px;top:442.0px" width="8.4" height="10.6" viewBox="0 0 8.4 10.6"><path d="M4.2 0.2 L8.2 4.6 H0.2 Z" fill="#c0c4cc"/><path d="M4.2 10.4 L8.2 6 H0.2 Z" fill="#c0c4cc"/></svg>
<svg style="left:1301.7px;top:444.3px" width="10" height="6" viewBox="0 0 10 6"><path d="M0.8 0.8 L5.0 5.2 L9.2 0.8" fill="none" stroke="#222" stroke-width="1.3"/></svg>
<div class="t" style="left:1342px;top:440.3px;font-size:10px;line-height:14px;color:#555;font-weight:normal;">品牌数量</div>
<svg style="left:1388px;top:442.0px" width="8.4" height="10.6" viewBox="0 0 8.4 10.6"><path d="M4.2 0.2 L8.2 4.6 H0.2 Z" fill="#c0c4cc"/><path d="M4.2 10.4 L8.2 6 H0.2 Z" fill="#c0c4cc"/></svg>
<svg style="left:1408.7px;top:444.3px" width="10" height="6" viewBox="0 0 10 6"><path d="M0.8 0.8 L5.0 5.2 L9.2 0.8" fill="none" stroke="#222" stroke-width="1.3"/></svg>
<div class="a" style="left:1440.4px;top:431.4px;width:17.6px;height:9.2px;background:#e8211c;border-radius:3px"></div>
<div class="t" style="left:1440.4px;top:429.0px;font-size:7px;line-height:14px;color:#fff;font-weight:bold;-webkit-text-stroke:0;width:17.6px;text-align:center">New</div>
<div class="t" style="left:1449px;top:440.3px;font-size:10px;line-height:14px;color:#555;font-weight:normal;">产品</div>
<div class="a" style="left:162.5px;top:461.7px;width:1307.0px;height:2px;background:#0a62f0"></div>
<div class="a" style="left:0;top:463.7px;width:1469px;height:740px;overflow:hidden">
<svg style="left:0;top:-463.7px" width="1469" height="1200"><defs><g id="wm" transform="rotate(-20.6)"><circle cx="0" cy="0" r="12" fill="none" stroke-width="3" stroke-dasharray="7 3"/><path d="M-6 -1 L-1 5 L9 -8" fill="none" stroke-width="3"/><text stroke="none" x="21" y="12.5" font-size="31" font-weight="bold" font-family="Liberation Sans">Sorftime</text></g></defs><g fill="#1a4a8c" stroke="#1a4a8c" opacity="0.035"><use href="#wm" x="201" y="374.2"/><use href="#wm" x="401" y="374.2"/><use href="#wm" x="601" y="374.2"/><use href="#wm" x="801" y="374.2"/><use href="#wm" x="1001" y="374.2"/><use href="#wm" x="1201" y="374.2"/><use href="#wm" x="1401" y="374.2"/><use href="#wm" x="201" y="463.0"/><use href="#wm" x="401" y="463.0"/><use href="#wm" x="601" y="463.0"/><use href="#wm" x="801" y="463.0"/><use href="#wm" x="1001" y="463.0"/><use href="#wm" x="1201" y="463.0"/><use href="#wm" x="1401" y="463.0"/><use href="#wm" x="201" y="551.8"/><use href="#wm" x="401" y="551.8"/><use href="#wm" x="601" y="551.8"/><use href="#wm" x="801" y="551.8"/><use href="#wm" x="1001" y="551.8"/><use href="#wm" x="1201" y="551.8"/><use href="#wm" x="1401" y="551.8"/><use href="#wm" x="201" y="640.5"/><use href="#wm" x="401" y="640.5"/><use href="#wm" x="601" y="640.5"/><use href="#wm" x="801" y="640.5"/><use href="#wm" x="1001" y="640.5"/><use href="#wm" x="1201" y="640.5"/><use href="#wm" x="1401" y="640.5"/><use href="#wm" x="201" y="729.2"/><use href="#wm" x="401" y="729.2"/><use href="#wm" x="601" y="729.2"/><use href="#wm" x="801" y="729.2"/><use href="#wm" x="1001" y="729.2"/><use href="#wm" x="1201" y="729.2"/><use href="#wm" x="1401" y="729.2"/><use href="#wm" x="201" y="818.0"/><use href="#wm" x="401" y="818.0"/><use href="#wm" x="601" y="818.0"/><use href="#wm" x="801" y="818.0"/><use href="#wm" x="1001" y="818.0"/><use href="#wm" x="1201" y="818.0"/><use href="#wm" x="1401" y="818.0"/><use href="#wm" x="201" y="906.8"/><use href="#wm" x="401" y="906.8"/><use href="#wm" x="601" y="906.8"/><use href="#wm" x="801" y="906.8"/><use href="#wm" x="1001" y="906.8"/><use href="#wm" x="1201" y="906.8"/><use href="#wm" x="1401" y="906.8"/><use href="#wm" x="201" y="995.5"/><use href="#wm" x="401" y="995.5"/><use href="#wm" x="601" y="995.5"/><use href="#wm" x="801" y="995.5"/><use href="#wm" x="1001" y="995.5"/><use href="#wm" x="1201" y="995.5"/><use href="#wm" x="1401" y="995.5"/><use href="#wm" x="201" y="1084.2"/><use href="#wm" x="401" y="1084.2"/><use href="#wm" x="601" y="1084.2"/><use href="#wm" x="801" y="1084.2"/><use href="#wm" x="1001" y="1084.2"/><use href="#wm" x="1201" y="1084.2"/><use href="#wm" x="1401" y="1084.2"/><use href="#wm" x="201" y="1173.0"/><use href="#wm" x="401" y="1173.0"/><use href="#wm" x="601" y="1173.0"/><use href="#wm" x="801" y="1173.0"/><use href="#wm" x="1001" y="1173.0"/><use href="#wm" x="1201" y="1173.0"/><use href="#wm" x="1401" y="1173.0"/><use href="#wm" x="201" y="1261.8"/><use href="#wm" x="401" y="1261.8"/><use href="#wm" x="601" y="1261.8"/><use href="#wm" x="801" y="1261.8"/><use href="#wm" x="1001" y="1261.8"/><use href="#wm" x="1201" y="1261.8"/><use href="#wm" x="1401" y="1261.8"/></g></svg>
</div>
<div class="a" style="left:162.5px;top:463.84px;width:1307.0px;height:66.56px;background:transparent;border-bottom:1px solid #e9ecf0"></div>
<div class="a" style="left:178.2px;top:489.53999999999996px;width:12.2px;height:12.2px;background:#fff;border:1px solid #3f82f5;border-radius:2px"></div>
<div class="t" style="left:214px;top:488.94px;font-size:10.5px;line-height:14px;color:#222;font-weight:normal;">1</div>
<svg style="left:300.9px;top:496.14px" width="16" height="16" viewBox="0 0 16 16"><circle cx="8" cy="8" r="8" fill="#1a6ff2"/><rect x="4.6" y="4" width="6.8" height="8.2" rx="1" fill="none" stroke="#fff" stroke-width="1.1"/><path d="M6.3 6.6 H9.7 M6.3 9.8 H9.7" stroke="#fff" stroke-width="1"/></svg>
<div class="t" style="left:330px;top:470.64px;font-size:10.5px;line-height:14px;color:#151515;font-weight:normal;">RAREWAVES-IMPORTS</div>
<svg style="left:332.8px;top:490.23999999999995px" width="10" height="11" viewBox="0 0 10 11"><path d="M3.4 2.4 V1.2 Q3.4 0.5 4.1 0.5 H7 L8.6 2.1 V7.6 Q8.6 8.3 7.9 8.3 H6.4" fill="none" stroke="#222" stroke-width="1.05"/><path d="M7 0.5 V2.1 H8.6" fill="none" stroke="#222" stroke-width="0.8"/><rect x="0.55" y="2.4" width="5.7" height="7.8" rx="0.8" fill="none" stroke="#222" stroke-width="1.05"/></svg>
<div class="t" style="left:350.3px;top:487.03999999999996px;font-size:12px;line-height:14px;color:#111;font-weight:bold;-webkit-text-stroke:0;">a</div>
<svg style="left:348.5px;top:498.03999999999996px" width="12" height="4" viewBox="0 0 12 4"><path d="M1 0.8 Q6 3.6 11 0.8" fill="none" stroke="#333" stroke-width="0.9"/></svg>
<div class="a" style="left:330.2px;top:507.23999999999995px;width:41.4px;height:16px;border:1px solid #4286f5;border-radius:2.5px;background:#fff"></div>
<div class="t" style="left:330.2px;top:508.23999999999995px;font-size:9px;line-height:14px;color:#3b7cf4;font-weight:normal;width:41.4px;text-align:center;-webkit-text-stroke:0.1px currentColor">卖家报告</div>
<div class="a" style="left:376.3px;top:507.23999999999995px;width:41.4px;height:16px;border:1px solid #4286f5;border-radius:2.5px;background:#fff"></div>
<div class="t" style="left:376.3px;top:508.23999999999995px;font-size:9px;line-height:14px;color:#3b7cf4;font-weight:normal;width:41.4px;text-align:center;-webkit-text-stroke:0.1px currentColor">业绩趋势</div>
<div class="a" style="left:422.3px;top:507.23999999999995px;width:59px;height:16px;border:1px solid #4286f5;border-radius:2.5px;background:#fff"></div>
<div class="t" style="left:422.3px;top:508.23999999999995px;font-size:9px;line-height:14px;color:#3b7cf4;font-weight:normal;width:59px;text-align:center;-webkit-text-stroke:0.1px currentColor">运营类目分析</div>
<div class="a" style="left:486.3px;top:507.23999999999995px;width:58.7px;height:16px;border:1px solid #4286f5;border-radius:2.5px;background:#fff"></div>
<div class="t" style="left:486.3px;top:508.23999999999995px;font-size:9px;line-height:14px;color:#3b7cf4;font-weight:normal;width:58.7px;text-align:center;-webkit-text-stroke:0.1px currentColor">分析卖家产品</div>
<div class="t" style="left:571px;top:488.84px;font-size:10.5px;line-height:14px;color:#222;font-weight:normal;">2017-10-12</div>
<svg style="left:745.9px;top:475.14px" width="14.3" height="14.3" viewBox="0 0 14.3 14.3"><clipPath id="cf0"><circle cx="7.15" cy="7.15" r="7.15"/></clipPath><g clip-path="url(#cf0)"><rect width="14.3" height="14.3" fill="#1f3a8f"/><path d="M0 0 L14.3 14.3 M14.3 0 L0 14.3" stroke="#fff" stroke-width="2.6"/><path d="M0 0 L14.3 14.3 M14.3 0 L0 14.3" stroke="#d8262d" stroke-width="1"/><path d="M7.15 0 V14.3 M0 7.15 H14.3" stroke="#fff" stroke-width="4"/><path d="M7.15 0 V14.3 M0 7.15 H14.3" stroke="#d8262d" stroke-width="2.2"/></g></svg>
<div class="t" style="left:767.3px;top:475.44px;font-size:10px;line-height:14px;color:#222;font-weight:normal;">英国</div>
<div class="t" style="left:746.5px;top:495.44px;font-size:10.5px;line-height:14px;color:#666;font-weight:normal;"><span style="font-size:10px">公司：</span>Rarewaves.c...</div>
<div class="t" style="left:920px;top:488.84px;font-size:10.5px;line-height:14px;color:#222;font-weight:normal;">391597</div>
<div class="t" style="left:1077px;top:488.84px;font-size:10.5px;line-height:14px;color:#222;font-weight:normal;">277</div>
<div class="t" style="left:1233.7px;top:488.84px;font-size:10.5px;line-height:14px;color:#222;font-weight:normal;">493</div>
<div class="t" style="left:1341px;top:488.84px;font-size:10.5px;line-height:14px;color:#222;font-weight:normal;">277</div>
<div class="t" style="left:1449px;top:488.84px;font-size:10.5px;line-height:14px;color:#222;font-weight:normal;">0.13</div>
<div class="a" style="left:162.5px;top:530.4px;width:1307.0px;height:66.56px;background:#f2f7fc;border-bottom:1px solid #e9ecf0"></div>
<div class="a" style="left:178.2px;top:556.1px;width:12.2px;height:12.2px;background:#fff;border:1px solid #3f82f5;border-radius:2px"></div>
<div class="t" style="left:214px;top:555.5px;font-size:10.5px;line-height:14px;color:#222;font-weight:normal;">2</div>
<svg style="left:300.9px;top:562.6999999999999px" width="16" height="16" viewBox="0 0 16 16"><circle cx="8" cy="8" r="8" fill="#1a6ff2"/><rect x="4.6" y="4" width="6.8" height="8.2" rx="1" fill="none" stroke="#fff" stroke-width="1.1"/><path d="M6.3 6.6 H9.7 M6.3 9.8 H9.7" stroke="#fff" stroke-width="1"/></svg>
<div class="t" style="left:330px;top:537.1999999999999px;font-size:10.5px;line-height:14px;color:#151515;font-weight:normal;">M + L</div>
<svg style="left:332.8px;top:556.8px" width="10" height="11" viewBox="0 0 10 11"><path d="M3.4 2.4 V1.2 Q3.4 0.5 4.1 0.5 H7 L8.6 2.1 V7.6 Q8.6 8.3 7.9 8.3 H6.4" fill="none" stroke="#222" stroke-width="1.05"/><path d="M7 0.5 V2.1 H8.6" fill="none" stroke="#222" stroke-width="0.8"/><rect x="0.55" y="2.4" width="5.7" height="7.8" rx="0.8" fill="none" stroke="#222" stroke-width="1.05"/></svg>
<div class="t" style="left:350.3px;top:553.6px;font-size:12px;line-height:14px;color:#111;font-weight:bold;-webkit-text-stroke:0;">a</div>
<svg style="left:348.5px;top:564.6px" width="12" height="4" viewBox="0 0 12 4"><path d="M1 0.8 Q6 3.6 11 0.8" fill="none" stroke="#333" stroke-width="0.9"/></svg>
<div class="a" style="left:330.2px;top:573.8px;width:41.4px;height:16px;border:1px solid #4286f5;border-radius:2.5px;background:#fff"></div>
<div class="t" style="left:330.2px;top:574.8px;font-size:9px;line-height:14px;color:#3b7cf4;font-weight:normal;width:41.4px;text-align:center;-webkit-text-stroke:0.1px currentColor">卖家报告</div>
<div class="a" style="left:376.3px;top:573.8px;width:41.4px;height:16px;border:1px solid #4286f5;border-radius:2.5px;background:#fff"></div>
<div class="t" style="left:376.3px;top:574.8px;font-size:9px;line-height:14px;color:#3b7cf4;font-weight:normal;width:41.4px;text-align:center;-webkit-text-stroke:0.1px currentColor">业绩趋势</div>
<div class="a" style="left:422.3px;top:573.8px;width:59px;height:16px;border:1px solid #4286f5;border-radius:2.5px;background:#fff"></div>
<div class="t" style="left:422.3px;top:574.8px;font-size:9px;line-height:14px;color:#3b7cf4;font-weight:normal;width:59px;text-align:center;-webkit-text-stroke:0.1px currentColor">运营类目分析</div>
<div class="a" style="left:486.3px;top:573.8px;width:58.7px;height:16px;border:1px solid #4286f5;border-radius:2.5px;background:#fff"></div>
<div class="t" style="left:486.3px;top:574.8px;font-size:9px;line-height:14px;color:#3b7cf4;font-weight:normal;width:58.7px;text-align:center;-webkit-text-stroke:0.1px currentColor">分析卖家产品</div>
<div class="t" style="left:571px;top:555.4px;font-size:10.5px;line-height:14px;color:#222;font-weight:normal;">2018-03-24</div>
<svg style="left:745.9px;top:541.6999999999999px" width="14.3" height="14.3" viewBox="0 0 14.3 14.3"><clipPath id="cf1"><circle cx="7.15" cy="7.15" r="7.15"/></clipPath><g clip-path="url(#cf1)"><rect width="14.3" height="4.766666666666667" fill="#111"/><rect y="4.766666666666667" width="14.3" height="4.766666666666667" fill="#dd1f26"/><rect y="9.533333333333333" width="14.3" height="5.266666666666667" fill="#ffce00"/></g></svg>
<div class="t" style="left:767.3px;top:542.0px;font-size:10px;line-height:14px;color:#222;font-weight:normal;">德国</div>
<div class="t" style="left:746.5px;top:562.0px;font-size:10.5px;line-height:14px;color:#666;font-weight:normal;"><span style="font-size:10px">公司：</span>Marc &amp; Luka...</div>
<div class="t" style="left:920px;top:555.4px;font-size:10.5px;line-height:14px;color:#222;font-weight:normal;">351440</div>
<div class="t" style="left:1077px;top:555.4px;font-size:10.5px;line-height:14px;color:#222;font-weight:normal;">391</div>
<div class="t" style="left:1233.7px;top:555.4px;font-size:10.5px;line-height:14px;color:#222;font-weight:normal;">795</div>
<div class="t" style="left:1341px;top:555.4px;font-size:10.5px;line-height:14px;color:#222;font-weight:normal;">391</div>
<div class="t" style="left:1449px;top:555.4px;font-size:10.5px;line-height:14px;color:#222;font-weight:normal;">0.23</div>
<div class="a" style="left:162.5px;top:596.96px;width:1307.0px;height:66.56px;background:transparent;border-bottom:1px solid #e9ecf0"></div>
<div class="a" style="left:178.2px;top:622.6600000000001px;width:12.2px;height:12.2px;background:#fff;border:1px solid #3f82f5;border-radius:2px"></div>
<div class="t" style="left:214px;top:622.0600000000001px;font-size:10.5px;line-height:14px;color:#222;font-weight:normal;">3</div>
<svg style="left:300.9px;top:629.26px" width="16" height="16" viewBox="0 0 16 16"><circle cx="8" cy="8" r="8" fill="#1a6ff2"/><rect x="4.6" y="4" width="6.8" height="8.2" rx="1" fill="none" stroke="#fff" stroke-width="1.1"/><path d="M6.3 6.6 H9.7 M6.3 9.8 H9.7" stroke="#fff" stroke-width="1"/></svg>
<div class="t" style="left:330px;top:603.76px;font-size:10.5px;line-height:14px;color:#151515;font-weight:normal;">Vosery</div>
<svg style="left:332.8px;top:623.36px" width="10" height="11" viewBox="0 0 10 11"><path d="M3.4 2.4 V1.2 Q3.4 0.5 4.1 0.5 H7 L8.6 2.1 V7.6 Q8.6 8.3 7.9 8.3 H6.4" fill="none" stroke="#222" stroke-width="1.05"/><path d="M7 0.5 V2.1 H8.6" fill="none" stroke="#222" stroke-width="0.8"/><rect x="0.55" y="2.4" width="5.7" height="7.8" rx="0.8" fill="none" stroke="#222" stroke-width="1.05"/></svg>
<div class="t" style="left:350.3px;top:620.1600000000001px;font-size:12px;line-height:14px;color:#111;font-weight:bold;-webkit-text-stroke:0;">a</div>
<svg style="left:348.5px;top:631.1600000000001px" width="12" height="4" viewBox="0 0 12 4"><path d="M1 0.8 Q6 3.6 11 0.8" fill="none" stroke="#333" stroke-width="0.9"/></svg>
<div class="a" style="left:330.2px;top:640.36px;width:41.4px;height:16px;border:1px solid #4286f5;border-radius:2.5px;background:#fff"></div>
<div class="t" style="left:330.2px;top:641.36px;font-size:9px;line-height:14px;color:#3b7cf4;font-weight:normal;width:41.4px;text-align:center;-webkit-text-stroke:0.1px currentColor">卖家报告</div>
<div class="a" style="left:376.3px;top:640.36px;width:41.4px;height:16px;border:1px solid #4286f5;border-radius:2.5px;background:#fff"></div>
<div class="t" style="left:376.3px;top:641.36px;font-size:9px;line-height:14px;color:#3b7cf4;font-weight:normal;width:41.4px;text-align:center;-webkit-text-stroke:0.1px currentColor">业绩趋势</div>
<div class="a" style="left:422.3px;top:640.36px;width:59px;height:16px;border:1px solid #4286f5;border-radius:2.5px;background:#fff"></div>
<div class="t" style="left:422.3px;top:641.36px;font-size:9px;line-height:14px;color:#3b7cf4;font-weight:normal;width:59px;text-align:center;-webkit-text-stroke:0.1px currentColor">运营类目分析</div>
<div class="a" style="left:486.3px;top:640.36px;width:58.7px;height:16px;border:1px solid #4286f5;border-radius:2.5px;background:#fff"></div>
<div class="t" style="left:486.3px;top:641.36px;font-size:9px;line-height:14px;color:#3b7cf4;font-weight:normal;width:58.7px;text-align:center;-webkit-text-stroke:0.1px currentColor">分析卖家产品</div>
<div class="t" style="left:571px;top:621.96px;font-size:10.5px;line-height:14px;color:#222;font-weight:normal;">2023-05-12</div>
<svg style="left:745.9px;top:608.26px" width="14.3" height="14.3" viewBox="0 0 14.3 14.3"><clipPath id="cf2"><circle cx="7.15" cy="7.15" r="7.15"/></clipPath><g clip-path="url(#cf2)"><rect width="14.3" height="14.3" fill="#e8251b"/><path d="M4 3 L4.6 4.6 L6.2 4.6 L4.9 5.6 L5.4 7.2 L4 6.2 L2.6 7.2 L3.1 5.6 L1.8 4.6 L3.4 4.6 Z" fill="#ffd200"/><circle cx="7.2" cy="2.8" r="0.55" fill="#ffd200"/><circle cx="8.2" cy="4.3" r="0.55" fill="#ffd200"/><circle cx="8.2" cy="6" r="0.55" fill="#ffd200"/><circle cx="7.2" cy="7.4" r="0.55" fill="#ffd200"/></g></svg>
<div class="t" style="left:767.3px;top:608.5600000000001px;font-size:10px;line-height:14px;color:#222;font-weight:normal;">中国</div>
<div class="t" style="left:746.5px;top:628.5600000000001px;font-size:10.5px;line-height:14px;color:#666;font-weight:normal;"><span style="font-size:10px">公司：</span>fuzhouqigum...</div>
<div class="t" style="left:920px;top:621.96px;font-size:10.5px;line-height:14px;color:#222;font-weight:normal;">292767</div>
<div class="t" style="left:1077px;top:621.96px;font-size:10.5px;line-height:14px;color:#222;font-weight:normal;">1</div>
<div class="t" style="left:1233.7px;top:621.96px;font-size:10.5px;line-height:14px;color:#222;font-weight:normal;">22</div>
<div class="t" style="left:1341px;top:621.96px;font-size:10.5px;line-height:14px;color:#222;font-weight:normal;">1</div>
<div class="t" style="left:1449px;top:621.96px;font-size:10.5px;line-height:14px;color:#222;font-weight:normal;">0.01</div>
<div class="a" style="left:162.5px;top:663.52px;width:1307.0px;height:66.56px;background:#f2f7fc;border-bottom:1px solid #e9ecf0"></div>
<div class="a" style="left:178.2px;top:689.22px;width:12.2px;height:12.2px;background:#fff;border:1px solid #3f82f5;border-radius:2px"></div>
<div class="t" style="left:214px;top:688.62px;font-size:10.5px;line-height:14px;color:#222;font-weight:normal;">4</div>
<svg style="left:300.9px;top:695.8199999999999px" width="16" height="16" viewBox="0 0 16 16"><circle cx="8" cy="8" r="8" fill="#1a6ff2"/><rect x="4.6" y="4" width="6.8" height="8.2" rx="1" fill="none" stroke="#fff" stroke-width="1.1"/><path d="M6.3 6.6 H9.7 M6.3 9.8 H9.7" stroke="#fff" stroke-width="1"/></svg>
<div class="t" style="left:330px;top:670.3199999999999px;font-size:10.5px;line-height:14px;color:#151515;font-weight:normal;">Phonograph</div>
<svg style="left:332.8px;top:689.92px" width="10" height="11" viewBox="0 0 10 11"><path d="M3.4 2.4 V1.2 Q3.4 0.5 4.1 0.5 H7 L8.6 2.1 V7.6 Q8.6 8.3 7.9 8.3 H6.4" fill="none" stroke="#222" stroke-width="1.05"/><path d="M7 0.5 V2.1 H8.6" fill="none" stroke="#222" stroke-width="0.8"/><rect x="0.55" y="2.4" width="5.7" height="7.8" rx="0.8" fill="none" stroke="#222" stroke-width="1.05"/></svg>
<div class="t" style="left:350.3px;top:686.72px;font-size:12px;line-height:14px;color:#111;font-weight:bold;-webkit-text-stroke:0;">a</div>
<svg style="left:348.5px;top:697.72px" width="12" height="4" viewBox="0 0 12 4"><path d="M1 0.8 Q6 3.6 11 0.8" fill="none" stroke="#333" stroke-width="0.9"/></svg>
<div class="a" style="left:330.2px;top:706.92px;width:41.4px;height:16px;border:1px solid #4286f5;border-radius:2.5px;background:#fff"></div>
<div class="t" style="left:330.2px;top:707.92px;font-size:9px;line-height:14px;color:#3b7cf4;font-weight:normal;width:41.4px;text-align:center;-webkit-text-stroke:0.1px currentColor">卖家报告</div>
<div class="a" style="left:376.3px;top:706.92px;width:41.4px;height:16px;border:1px solid #4286f5;border-radius:2.5px;background:#fff"></div>
<div class="t" style="left:376.3px;top:707.92px;font-size:9px;line-height:14px;color:#3b7cf4;font-weight:normal;width:41.4px;text-align:center;-webkit-text-stroke:0.1px currentColor">业绩趋势</div>
<div class="a" style="left:422.3px;top:706.92px;width:59px;height:16px;border:1px solid #4286f5;border-radius:2.5px;background:#fff"></div>
<div class="t" style="left:422.3px;top:707.92px;font-size:9px;line-height:14px;color:#3b7cf4;font-weight:normal;width:59px;text-align:center;-webkit-text-stroke:0.1px currentColor">运营类目分析</div>
<div class="a" style="left:486.3px;top:706.92px;width:58.7px;height:16px;border:1px solid #4286f5;border-radius:2.5px;background:#fff"></div>
<div class="t" style="left:486.3px;top:707.92px;font-size:9px;line-height:14px;color:#3b7cf4;font-weight:normal;width:58.7px;text-align:center;-webkit-text-stroke:0.1px currentColor">分析卖家产品</div>
<div class="t" style="left:571px;top:688.52px;font-size:10.5px;line-height:14px;color:#222;font-weight:normal;">2016-05-03</div>
<svg style="left:745.9px;top:674.8199999999999px" width="14.3" height="14.3" viewBox="0 0 14.3 14.3"><clipPath id="cf3"><circle cx="7.15" cy="7.15" r="7.15"/></clipPath><g clip-path="url(#cf3)"><rect width="14.3" height="14.3" fill="#fff"/><rect y="0.00" width="14.3" height="1.59" fill="#1b6fc2"/><rect y="3.18" width="14.3" height="1.59" fill="#1b6fc2"/><rect y="6.36" width="14.3" height="1.59" fill="#1b6fc2"/><rect y="9.53" width="14.3" height="1.59" fill="#1b6fc2"/><rect y="12.71" width="14.3" height="1.59" fill="#1b6fc2"/><rect width="7.94" height="7.94" fill="#1b6fc2"/><path d="M3.97 0 V7.94 M0 3.97 H7.94" stroke="#fff" stroke-width="1.59"/></g></svg>
<div class="t" style="left:767.3px;top:675.12px;font-size:10px;line-height:14px;color:#222;font-weight:normal;">希腊</div>
<div class="t" style="left:746.5px;top:695.12px;font-size:10.5px;line-height:14px;color:#666;font-weight:normal;"><span style="font-size:10px">公司：</span>Phonograph ...</div>
<div class="t" style="left:920px;top:688.52px;font-size:10.5px;line-height:14px;color:#222;font-weight:normal;">280143</div>
<div class="t" style="left:1077px;top:688.52px;font-size:10.5px;line-height:14px;color:#222;font-weight:normal;">194</div>
<div class="t" style="left:1233.7px;top:688.52px;font-size:10.5px;line-height:14px;color:#222;font-weight:normal;">284</div>
<div class="t" style="left:1341px;top:688.52px;font-size:10.5px;line-height:14px;color:#222;font-weight:normal;">194</div>
<div class="t" style="left:1449px;top:688.52px;font-size:10.5px;line-height:14px;color:#222;font-weight:normal;">0.10</div>
<div class="a" style="left:162.5px;top:730.0799999999999px;width:1307.0px;height:66.56px;background:transparent;border-bottom:1px solid #e9ecf0"></div>
<div class="a" style="left:178.2px;top:755.78px;width:12.2px;height:12.2px;background:#fff;border:1px solid #3f82f5;border-radius:2px"></div>
<div class="t" style="left:214px;top:755.18px;font-size:10.5px;line-height:14px;color:#222;font-weight:normal;">5</div>
<svg style="left:300.9px;top:762.3799999999999px" width="16" height="16" viewBox="0 0 16 16"><circle cx="8" cy="8" r="8" fill="#1a6ff2"/><rect x="4.6" y="4" width="6.8" height="8.2" rx="1" fill="none" stroke="#fff" stroke-width="1.1"/><path d="M6.3 6.6 H9.7 M6.3 9.8 H9.7" stroke="#fff" stroke-width="1"/></svg>
<div class="t" style="left:330px;top:736.8799999999999px;font-size:10.5px;line-height:14px;color:#151515;font-weight:normal;">Hryg</div>
<svg style="left:332.8px;top:756.4799999999999px" width="10" height="11" viewBox="0 0 10 11"><path d="M3.4 2.4 V1.2 Q3.4 0.5 4.1 0.5 H7 L8.6 2.1 V7.6 Q8.6 8.3 7.9 8.3 H6.4" fill="none" stroke="#222" stroke-width="1.05"/><path d="M7 0.5 V2.1 H8.6" fill="none" stroke="#222" stroke-width="0.8"/><rect x="0.55" y="2.4" width="5.7" height="7.8" rx="0.8" fill="none" stroke="#222" stroke-width="1.05"/></svg>
<div class="t" style="left:350.3px;top:753.28px;font-size:12px;line-height:14px;color:#111;font-weight:bold;-webkit-text-stroke:0;">a</div>
<svg style="left:348.5px;top:764.28px" width="12" height="4" viewBox="0 0 12 4"><path d="M1 0.8 Q6 3.6 11 0.8" fill="none" stroke="#333" stroke-width="0.9"/></svg>
<div class="a" style="left:330.2px;top:773.4799999999999px;width:41.4px;height:16px;border:1px solid #4286f5;border-radius:2.5px;background:#fff"></div>
<div class="t" style="left:330.2px;top:774.4799999999999px;font-size:9px;line-height:14px;color:#3b7cf4;font-weight:normal;width:41.4px;text-align:center;-webkit-text-stroke:0.1px currentColor">卖家报告</div>
<div class="a" style="left:376.3px;top:773.4799999999999px;width:41.4px;height:16px;border:1px solid #4286f5;border-radius:2.5px;background:#fff"></div>
<div class="t" style="left:376.3px;top:774.4799999999999px;font-size:9px;line-height:14px;color:#3b7cf4;font-weight:normal;width:41.4px;text-align:center;-webkit-text-stroke:0.1px currentColor">业绩趋势</div>
<div class="a" style="left:422.3px;top:773.4799999999999px;width:59px;height:16px;border:1px solid #4286f5;border-radius:2.5px;background:#fff"></div>
<div class="t" style="left:422.3px;top:774.4799999999999px;font-size:9px;line-height:14px;color:#3b7cf4;font-weight:normal;width:59px;text-align:center;-webkit-text-stroke:0.1px currentColor">运营类目分析</div>
<div class="a" style="left:486.3px;top:773.4799999999999px;width:58.7px;height:16px;border:1px solid #4286f5;border-radius:2.5px;background:#fff"></div>
<div class="t" style="left:486.3px;top:774.4799999999999px;font-size:9px;line-height:14px;color:#3b7cf4;font-weight:normal;width:58.7px;text-align:center;-webkit-text-stroke:0.1px currentColor">分析卖家产品</div>
<div class="t" style="left:571px;top:755.0799999999999px;font-size:10.5px;line-height:14px;color:#222;font-weight:normal;">2021-02-14</div>
<svg style="left:745.9px;top:741.3799999999999px" width="14.3" height="14.3" viewBox="0 0 14.3 14.3"><clipPath id="cf4"><circle cx="7.15" cy="7.15" r="7.15"/></clipPath><g clip-path="url(#cf4)"><rect width="14.3" height="14.3" fill="#e8251b"/><path d="M4 3 L4.6 4.6 L6.2 4.6 L4.9 5.6 L5.4 7.2 L4 6.2 L2.6 7.2 L3.1 5.6 L1.8 4.6 L3.4 4.6 Z" fill="#ffd200"/><circle cx="7.2" cy="2.8" r="0.55" fill="#ffd200"/><circle cx="8.2" cy="4.3" r="0.55" fill="#ffd200"/><circle cx="8.2" cy="6" r="0.55" fill="#ffd200"/><circle cx="7.2" cy="7.4" r="0.55" fill="#ffd200"/></g></svg>
<div class="t" style="left:767.3px;top:741.68px;font-size:10px;line-height:14px;color:#222;font-weight:normal;">中国</div>
<div class="t" style="left:746.5px;top:761.68px;font-size:10.5px;line-height:14px;color:#666;font-weight:normal;"><span style="font-size:10px">公司：</span>Fuzhou Jiuqu...</div>
<div class="t" style="left:920px;top:755.0799999999999px;font-size:10.5px;line-height:14px;color:#222;font-weight:normal;">274978</div>
<div class="t" style="left:1077px;top:755.0799999999999px;font-size:10.5px;line-height:14px;color:#222;font-weight:normal;">1</div>
<div class="t" style="left:1233.7px;top:755.0799999999999px;font-size:10.5px;line-height:14px;color:#222;font-weight:normal;">12</div>
<div class="t" style="left:1341px;top:755.0799999999999px;font-size:10.5px;line-height:14px;color:#222;font-weight:normal;">1</div>
<div class="t" style="left:1449px;top:755.0799999999999px;font-size:10.5px;line-height:14px;color:#222;font-weight:normal;">0.00</div>
<div class="a" style="left:162.5px;top:796.64px;width:1307.0px;height:66.56px;background:#f2f7fc;border-bottom:1px solid #e9ecf0"></div>
<div class="a" style="left:178.2px;top:822.34px;width:12.2px;height:12.2px;background:#fff;border:1px solid #3f82f5;border-radius:2px"></div>
<div class="t" style="left:214px;top:821.74px;font-size:10.5px;line-height:14px;color:#222;font-weight:normal;">6</div>
<svg style="left:300.9px;top:828.9399999999999px" width="16" height="16" viewBox="0 0 16 16"><circle cx="8" cy="8" r="8" fill="#1a6ff2"/><rect x="4.6" y="4" width="6.8" height="8.2" rx="1" fill="none" stroke="#fff" stroke-width="1.1"/><path d="M6.3 6.6 H9.7 M6.3 9.8 H9.7" stroke="#fff" stroke-width="1"/></svg>
<div class="t" style="left:330px;top:803.4399999999999px;font-size:10.5px;line-height:14px;color:#151515;font-weight:normal;">UnbeatableSale Local</div>
<svg style="left:332.8px;top:823.04px" width="10" height="11" viewBox="0 0 10 11"><path d="M3.4 2.4 V1.2 Q3.4 0.5 4.1 0.5 H7 L8.6 2.1 V7.6 Q8.6 8.3 7.9 8.3 H6.4" fill="none" stroke="#222" stroke-width="1.05"/><path d="M7 0.5 V2.1 H8.6" fill="none" stroke="#222" stroke-width="0.8"/><rect x="0.55" y="2.4" width="5.7" height="7.8" rx="0.8" fill="none" stroke="#222" stroke-width="1.05"/></svg>
<div class="t" style="left:350.3px;top:819.84px;font-size:12px;line-height:14px;color:#111;font-weight:bold;-webkit-text-stroke:0;">a</div>
<svg style="left:348.5px;top:830.84px" width="12" height="4" viewBox="0 0 12 4"><path d="M1 0.8 Q6 3.6 11 0.8" fill="none" stroke="#333" stroke-width="0.9"/></svg>
<div class="a" style="left:330.2px;top:840.04px;width:41.4px;height:16px;border:1px solid #4286f5;border-radius:2.5px;background:#fff"></div>
<div class="t" style="left:330.2px;top:841.04px;font-size:9px;line-height:14px;color:#3b7cf4;font-weight:normal;width:41.4px;text-align:center;-webkit-text-stroke:0.1px currentColor">卖家报告</div>
<div class="a" style="left:376.3px;top:840.04px;width:41.4px;height:16px;border:1px solid #4286f5;border-radius:2.5px;background:#fff"></div>
<div class="t" style="left:376.3px;top:841.04px;font-size:9px;line-height:14px;color:#3b7cf4;font-weight:normal;width:41.4px;text-align:center;-webkit-text-stroke:0.1px currentColor">业绩趋势</div>
<div class="a" style="left:422.3px;top:840.04px;width:59px;height:16px;border:1px solid #4286f5;border-radius:2.5px;background:#fff"></div>
<div class="t" style="left:422.3px;top:841.04px;font-size:9px;line-height:14px;color:#3b7cf4;font-weight:normal;width:59px;text-align:center;-webkit-text-stroke:0.1px currentColor">运营类目分析</div>
<div class="a" style="left:486.3px;top:840.04px;width:58.7px;height:16px;border:1px solid #4286f5;border-radius:2.5px;background:#fff"></div>
<div class="t" style="left:486.3px;top:841.04px;font-size:9px;line-height:14px;color:#3b7cf4;font-weight:normal;width:58.7px;text-align:center;-webkit-text-stroke:0.1px currentColor">分析卖家产品</div>
<div class="t" style="left:571px;top:821.64px;font-size:10.5px;line-height:14px;color:#222;font-weight:normal;">2022-12-02</div>
<svg style="left:745.9px;top:807.9399999999999px" width="14.3" height="14.3" viewBox="0 0 14.3 14.3"><clipPath id="cf5"><circle cx="7.15" cy="7.15" r="7.15"/></clipPath><g clip-path="url(#cf5)"><rect width="14.3" height="14.3" fill="#fff"/><rect y="0.00" width="14.3" height="1.10" fill="#d52b1e"/><rect y="2.20" width="14.3" height="1.10" fill="#d52b1e"/><rect y="4.40" width="14.3" height="1.10" fill="#d52b1e"/><rect y="6.60" width="14.3" height="1.10" fill="#d52b1e"/><rect y="8.80" width="14.3" height="1.10" fill="#d52b1e"/><rect y="11.00" width="14.3" height="1.10" fill="#d52b1e"/><rect y="13.20" width="14.3" height="1.10" fill="#d52b1e"/><rect width="6.44" height="7.70" fill="#3c3b6e"/></g></svg>
<div class="t" style="left:767.3px;top:808.24px;font-size:10px;line-height:14px;color:#222;font-weight:normal;">美国</div>
<div class="t" style="left:746.5px;top:828.24px;font-size:10.5px;line-height:14px;color:#666;font-weight:normal;"><span style="font-size:10px">公司：</span>1313 JEFFR...</div>
<div class="t" style="left:920px;top:821.64px;font-size:10.5px;line-height:14px;color:#222;font-weight:normal;">271156</div>
<div class="t" style="left:1077px;top:821.64px;font-size:10.5px;line-height:14px;color:#222;font-weight:normal;">1,356</div>
<div class="t" style="left:1233.7px;top:821.64px;font-size:10.5px;line-height:14px;color:#222;font-weight:normal;">3,477</div>
<div class="t" style="left:1341px;top:821.64px;font-size:10.5px;line-height:14px;color:#222;font-weight:normal;">1,356</div>
<div class="t" style="left:1449px;top:821.64px;font-size:10.5px;line-height:14px;color:#222;font-weight:normal;">1.28</div>
<div class="a" style="left:162.5px;top:863.2px;width:1307.0px;height:66.56px;background:transparent;border-bottom:1px solid #e9ecf0"></div>
<div class="a" style="left:178.2px;top:888.9000000000001px;width:12.2px;height:12.2px;background:#fff;border:1px solid #3f82f5;border-radius:2px"></div>
<div class="t" style="left:214px;top:888.3000000000001px;font-size:10.5px;line-height:14px;color:#222;font-weight:normal;">7</div>
<svg style="left:300.9px;top:895.5px" width="16" height="16" viewBox="0 0 16 16"><circle cx="8" cy="8" r="8" fill="#1a6ff2"/><rect x="4.6" y="4" width="6.8" height="8.2" rx="1" fill="none" stroke="#fff" stroke-width="1.1"/><path d="M6.3 6.6 H9.7 M6.3 9.8 H9.7" stroke="#fff" stroke-width="1"/></svg>
<div class="t" style="left:330px;top:870.0px;font-size:10.5px;line-height:14px;color:#151515;font-weight:normal;">3dRose LLC</div>
<svg style="left:332.8px;top:889.6px" width="10" height="11" viewBox="0 0 10 11"><path d="M3.4 2.4 V1.2 Q3.4 0.5 4.1 0.5 H7 L8.6 2.1 V7.6 Q8.6 8.3 7.9 8.3 H6.4" fill="none" stroke="#222" stroke-width="1.05"/><path d="M7 0.5 V2.1 H8.6" fill="none" stroke="#222" stroke-width="0.8"/><rect x="0.55" y="2.4" width="5.7" height="7.8" rx="0.8" fill="none" stroke="#222" stroke-width="1.05"/></svg>
<div class="t" style="left:350.3px;top:886.4000000000001px;font-size:12px;line-height:14px;color:#111;font-weight:bold;-webkit-text-stroke:0;">a</div>
<svg style="left:348.5px;top:897.4000000000001px" width="12" height="4" viewBox="0 0 12 4"><path d="M1 0.8 Q6 3.6 11 0.8" fill="none" stroke="#333" stroke-width="0.9"/></svg>
<div class="a" style="left:330.2px;top:906.6px;width:41.4px;height:16px;border:1px solid #4286f5;border-radius:2.5px;background:#fff"></div>
<div class="t" style="left:330.2px;top:907.6px;font-size:9px;line-height:14px;color:#3b7cf4;font-weight:normal;width:41.4px;text-align:center;-webkit-text-stroke:0.1px currentColor">卖家报告</div>
<div class="a" style="left:376.3px;top:906.6px;width:41.4px;height:16px;border:1px solid #4286f5;border-radius:2.5px;background:#fff"></div>
<div class="t" style="left:376.3px;top:907.6px;font-size:9px;line-height:14px;color:#3b7cf4;font-weight:normal;width:41.4px;text-align:center;-webkit-text-stroke:0.1px currentColor">业绩趋势</div>
<div class="a" style="left:422.3px;top:906.6px;width:59px;height:16px;border:1px solid #4286f5;border-radius:2.5px;background:#fff"></div>
<div class="t" style="left:422.3px;top:907.6px;font-size:9px;line-height:14px;color:#3b7cf4;font-weight:normal;width:59px;text-align:center;-webkit-text-stroke:0.1px currentColor">运营类目分析</div>
<div class="a" style="left:486.3px;top:906.6px;width:58.7px;height:16px;border:1px solid #4286f5;border-radius:2.5px;background:#fff"></div>
<div class="t" style="left:486.3px;top:907.6px;font-size:9px;line-height:14px;color:#3b7cf4;font-weight:normal;width:58.7px;text-align:center;-webkit-text-stroke:0.1px currentColor">分析卖家产品</div>
<div class="t" style="left:571px;top:888.2px;font-size:10.5px;line-height:14px;color:#222;font-weight:normal;">2016-06-04</div>
<svg style="left:745.9px;top:874.5px" width="14.3" height="14.3" viewBox="0 0 14.3 14.3"><clipPath id="cf6"><circle cx="7.15" cy="7.15" r="7.15"/></clipPath><g clip-path="url(#cf6)"><rect width="14.3" height="14.3" fill="#fff"/><rect y="0.00" width="14.3" height="1.10" fill="#d52b1e"/><rect y="2.20" width="14.3" height="1.10" fill="#d52b1e"/><rect y="4.40" width="14.3" height="1.10" fill="#d52b1e"/><rect y="6.60" width="14.3" height="1.10" fill="#d52b1e"/><rect y="8.80" width="14.3" height="1.10" fill="#d52b1e"/><rect y="11.00" width="14.3" height="1.10" fill="#d52b1e"/><rect y="13.20" width="14.3" height="1.10" fill="#d52b1e"/><rect width="6.44" height="7.70" fill="#3c3b6e"/></g></svg>
<div class="t" style="left:767.3px;top:874.8000000000001px;font-size:10px;line-height:14px;color:#222;font-weight:normal;">美国</div>
<div class="t" style="left:746.5px;top:894.8000000000001px;font-size:10.5px;line-height:14px;color:#666;font-weight:normal;"><span style="font-size:10px">公司：</span>3DROSE NJ ...</div>
<div class="t" style="left:920px;top:888.2px;font-size:10.5px;line-height:14px;color:#222;font-weight:normal;">270887</div>
<div class="t" style="left:1077px;top:888.2px;font-size:10.5px;line-height:14px;color:#222;font-weight:normal;">1</div>
<div class="t" style="left:1233.7px;top:888.2px;font-size:10.5px;line-height:14px;color:#222;font-weight:normal;">38</div>
<div class="t" style="left:1341px;top:888.2px;font-size:10.5px;line-height:14px;color:#222;font-weight:normal;">1</div>
<div class="t" style="left:1449px;top:888.2px;font-size:10.5px;line-height:14px;color:#222;font-weight:normal;">0.01</div>
<div class="a" style="left:162.5px;top:929.76px;width:1307.0px;height:66.56px;background:#f2f7fc;border-bottom:1px solid #e9ecf0"></div>
<div class="a" style="left:178.2px;top:955.46px;width:12.2px;height:12.2px;background:#fff;border:1px solid #3f82f5;border-radius:2px"></div>
<div class="t" style="left:214px;top:954.86px;font-size:10.5px;line-height:14px;color:#222;font-weight:normal;">8</div>
<svg style="left:300.9px;top:962.06px" width="16" height="16" viewBox="0 0 16 16"><circle cx="8" cy="8" r="8" fill="#1a6ff2"/><rect x="4.6" y="4" width="6.8" height="8.2" rx="1" fill="none" stroke="#fff" stroke-width="1.1"/><path d="M6.3 6.6 H9.7 M6.3 9.8 H9.7" stroke="#fff" stroke-width="1"/></svg>
<div class="t" style="left:330px;top:936.56px;font-size:10.5px;line-height:14px;color:#151515;font-weight:normal;">SA-Toy</div>
<svg style="left:332.8px;top:956.16px" width="10" height="11" viewBox="0 0 10 11"><path d="M3.4 2.4 V1.2 Q3.4 0.5 4.1 0.5 H7 L8.6 2.1 V7.6 Q8.6 8.3 7.9 8.3 H6.4" fill="none" stroke="#222" stroke-width="1.05"/><path d="M7 0.5 V2.1 H8.6" fill="none" stroke="#222" stroke-width="0.8"/><rect x="0.55" y="2.4" width="5.7" height="7.8" rx="0.8" fill="none" stroke="#222" stroke-width="1.05"/></svg>
<div class="t" style="left:350.3px;top:952.96px;font-size:12px;line-height:14px;color:#111;font-weight:bold;-webkit-text-stroke:0;">a</div>
<svg style="left:348.5px;top:963.96px" width="12" height="4" viewBox="0 0 12 4"><path d="M1 0.8 Q6 3.6 11 0.8" fill="none" stroke="#333" stroke-width="0.9"/></svg>
<div class="a" style="left:330.2px;top:973.16px;width:41.4px;height:16px;border:1px solid #4286f5;border-radius:2.5px;background:#fff"></div>
<div class="t" style="left:330.2px;top:974.16px;font-size:9px;line-height:14px;color:#3b7cf4;font-weight:normal;width:41.4px;text-align:center;-webkit-text-stroke:0.1px currentColor">卖家报告</div>
<div class="a" style="left:376.3px;top:973.16px;width:41.4px;height:16px;border:1px solid #4286f5;border-radius:2.5px;background:#fff"></div>
<div class="t" style="left:376.3px;top:974.16px;font-size:9px;line-height:14px;color:#3b7cf4;font-weight:normal;width:41.4px;text-align:center;-webkit-text-stroke:0.1px currentColor">业绩趋势</div>
<div class="a" style="left:422.3px;top:973.16px;width:59px;height:16px;border:1px solid #4286f5;border-radius:2.5px;background:#fff"></div>
<div class="t" style="left:422.3px;top:974.16px;font-size:9px;line-height:14px;color:#3b7cf4;font-weight:normal;width:59px;text-align:center;-webkit-text-stroke:0.1px currentColor">运营类目分析</div>
<div class="a" style="left:486.3px;top:973.16px;width:58.7px;height:16px;border:1px solid #4286f5;border-radius:2.5px;background:#fff"></div>
<div class="t" style="left:486.3px;top:974.16px;font-size:9px;line-height:14px;color:#3b7cf4;font-weight:normal;width:58.7px;text-align:center;-webkit-text-stroke:0.1px currentColor">分析卖家产品</div>
<div class="t" style="left:571px;top:954.76px;font-size:10.5px;line-height:14px;color:#222;font-weight:normal;">2022-02-10</div>
<svg style="left:745.9px;top:941.06px" width="14.3" height="14.3" viewBox="0 0 14.3 14.3"><clipPath id="cf7"><circle cx="7.15" cy="7.15" r="7.15"/></clipPath><g clip-path="url(#cf7)"><rect width="14.3" height="14.3" fill="#e8251b"/><path d="M4 3 L4.6 4.6 L6.2 4.6 L4.9 5.6 L5.4 7.2 L4 6.2 L2.6 7.2 L3.1 5.6 L1.8 4.6 L3.4 4.6 Z" fill="#ffd200"/><circle cx="7.2" cy="2.8" r="0.55" fill="#ffd200"/><circle cx="8.2" cy="4.3" r="0.55" fill="#ffd200"/><circle cx="8.2" cy="6" r="0.55" fill="#ffd200"/><circle cx="7.2" cy="7.4" r="0.55" fill="#ffd200"/></g></svg>
<div class="t" style="left:767.3px;top:941.36px;font-size:10px;line-height:14px;color:#222;font-weight:normal;">中国</div>
<div class="t" style="left:746.5px;top:961.36px;font-size:10.5px;line-height:14px;color:#666;font-weight:normal;"><span style="font-size:10px">公司：</span>fuzhoushian...</div>
<div class="t" style="left:920px;top:954.76px;font-size:10.5px;line-height:14px;color:#222;font-weight:normal;">263876</div>
<div class="t" style="left:1077px;top:954.76px;font-size:10.5px;line-height:14px;color:#222;font-weight:normal;">1</div>
<div class="t" style="left:1233.7px;top:954.76px;font-size:10.5px;line-height:14px;color:#222;font-weight:normal;">19</div>
<div class="t" style="left:1341px;top:954.76px;font-size:10.5px;line-height:14px;color:#222;font-weight:normal;">1</div>
<div class="t" style="left:1449px;top:954.76px;font-size:10.5px;line-height:14px;color:#222;font-weight:normal;">0.01</div>
<div class="a" style="left:162.5px;top:996.3199999999999px;width:1307.0px;height:66.56px;background:transparent;border-bottom:1px solid #e9ecf0"></div>
<div class="a" style="left:178.2px;top:1022.02px;width:12.2px;height:12.2px;background:#fff;border:1px solid #3f82f5;border-radius:2px"></div>
<div class="t" style="left:214px;top:1021.42px;font-size:10.5px;line-height:14px;color:#222;font-weight:normal;">9</div>
<svg style="left:300.9px;top:1028.62px" width="16" height="16" viewBox="0 0 16 16"><circle cx="8" cy="8" r="8" fill="#1a6ff2"/><rect x="4.6" y="4" width="6.8" height="8.2" rx="1" fill="none" stroke="#fff" stroke-width="1.1"/><path d="M6.3 6.6 H9.7 M6.3 9.8 H9.7" stroke="#fff" stroke-width="1"/></svg>
<div class="t" style="left:330px;top:1003.1199999999999px;font-size:10.5px;line-height:14px;color:#151515;font-weight:normal;">lllzzzbbbb</div>
<svg style="left:332.8px;top:1022.7199999999999px" width="10" height="11" viewBox="0 0 10 11"><path d="M3.4 2.4 V1.2 Q3.4 0.5 4.1 0.5 H7 L8.6 2.1 V7.6 Q8.6 8.3 7.9 8.3 H6.4" fill="none" stroke="#222" stroke-width="1.05"/><path d="M7 0.5 V2.1 H8.6" fill="none" stroke="#222" stroke-width="0.8"/><rect x="0.55" y="2.4" width="5.7" height="7.8" rx="0.8" fill="none" stroke="#222" stroke-width="1.05"/></svg>
<div class="t" style="left:350.3px;top:1019.52px;font-size:12px;line-height:14px;color:#111;font-weight:bold;-webkit-text-stroke:0;">a</div>
<svg style="left:348.5px;top:1030.52px" width="12" height="4" viewBox="0 0 12 4"><path d="M1 0.8 Q6 3.6 11 0.8" fill="none" stroke="#333" stroke-width="0.9"/></svg>
<div class="a" style="left:330.2px;top:1039.72px;width:41.4px;height:16px;border:1px solid #4286f5;border-radius:2.5px;background:#fff"></div>
<div class="t" style="left:330.2px;top:1040.72px;font-size:9px;line-height:14px;color:#3b7cf4;font-weight:normal;width:41.4px;text-align:center;-webkit-text-stroke:0.1px currentColor">卖家报告</div>
<div class="a" style="left:376.3px;top:1039.72px;width:41.4px;height:16px;border:1px solid #4286f5;border-radius:2.5px;background:#fff"></div>
<div class="t" style="left:376.3px;top:1040.72px;font-size:9px;line-height:14px;color:#3b7cf4;font-weight:normal;width:41.4px;text-align:center;-webkit-text-stroke:0.1px currentColor">业绩趋势</div>
<div class="a" style="left:422.3px;top:1039.72px;width:59px;height:16px;border:1px solid #4286f5;border-radius:2.5px;background:#fff"></div>
<div class="t" style="left:422.3px;top:1040.72px;font-size:9px;line-height:14px;color:#3b7cf4;font-weight:normal;width:59px;text-align:center;-webkit-text-stroke:0.1px currentColor">运营类目分析</div>
<div class="a" style="left:486.3px;top:1039.72px;width:58.7px;height:16px;border:1px solid #4286f5;border-radius:2.5px;background:#fff"></div>
<div class="t" style="left:486.3px;top:1040.72px;font-size:9px;line-height:14px;color:#3b7cf4;font-weight:normal;width:58.7px;text-align:center;-webkit-text-stroke:0.1px currentColor">分析卖家产品</div>
<div class="t" style="left:571px;top:1021.3199999999999px;font-size:10.5px;line-height:14px;color:#222;font-weight:normal;">2023-12-18</div>
<svg style="left:745.9px;top:1007.6199999999999px" width="14.3" height="14.3" viewBox="0 0 14.3 14.3"><clipPath id="cf8"><circle cx="7.15" cy="7.15" r="7.15"/></clipPath><g clip-path="url(#cf8)"><rect width="14.3" height="14.3" fill="#e8251b"/><path d="M4 3 L4.6 4.6 L6.2 4.6 L4.9 5.6 L5.4 7.2 L4 6.2 L2.6 7.2 L3.1 5.6 L1.8 4.6 L3.4 4.6 Z" fill="#ffd200"/><circle cx="7.2" cy="2.8" r="0.55" fill="#ffd200"/><circle cx="8.2" cy="4.3" r="0.55" fill="#ffd200"/><circle cx="8.2" cy="6" r="0.55" fill="#ffd200"/><circle cx="7.2" cy="7.4" r="0.55" fill="#ffd200"/></g></svg>
<div class="t" style="left:767.3px;top:1007.92px;font-size:10px;line-height:14px;color:#222;font-weight:normal;">中国</div>
<div class="t" style="left:746.5px;top:1027.9199999999998px;font-size:10.5px;line-height:14px;color:#666;font-weight:normal;"><span style="font-size:10px">公司：</span>xiangchengs...</div>
<div class="t" style="left:920px;top:1021.3199999999999px;font-size:10.5px;line-height:14px;color:#222;font-weight:normal;">260096</div>
<div class="t" style="left:1077px;top:1021.3199999999999px;font-size:10.5px;line-height:14px;color:#222;font-weight:normal;">1</div>
<div class="t" style="left:1233.7px;top:1021.3199999999999px;font-size:10.5px;line-height:14px;color:#222;font-weight:normal;">4</div>
<div class="t" style="left:1341px;top:1021.3199999999999px;font-size:10.5px;line-height:14px;color:#222;font-weight:normal;">1</div>
<div class="t" style="left:1449px;top:1021.3199999999999px;font-size:10.5px;line-height:14px;color:#222;font-weight:normal;">0.00</div>
<div class="a" style="left:162.5px;top:1062.8799999999999px;width:1307.0px;height:66.56px;background:#f2f7fc;border-bottom:1px solid #e9ecf0"></div>
<div class="a" style="left:178.2px;top:1088.58px;width:12.2px;height:12.2px;background:#fff;border:1px solid #3f82f5;border-radius:2px"></div>
<div class="t" style="left:214px;top:1087.9799999999998px;font-size:10.5px;line-height:14px;color:#222;font-weight:normal;">10</div>
<svg style="left:300.9px;top:1095.1799999999998px" width="16" height="16" viewBox="0 0 16 16"><circle cx="8" cy="8" r="8" fill="#1a6ff2"/><rect x="4.6" y="4" width="6.8" height="8.2" rx="1" fill="none" stroke="#fff" stroke-width="1.1"/><path d="M6.3 6.6 H9.7 M6.3 9.8 H9.7" stroke="#fff" stroke-width="1"/></svg>
<div class="t" style="left:330px;top:1069.6799999999998px;font-size:10.5px;line-height:14px;color:#151515;font-weight:normal;">RAREWAVES-USA</div>
<svg style="left:332.8px;top:1089.28px" width="10" height="11" viewBox="0 0 10 11"><path d="M3.4 2.4 V1.2 Q3.4 0.5 4.1 0.5 H7 L8.6 2.1 V7.6 Q8.6 8.3 7.9 8.3 H6.4" fill="none" stroke="#222" stroke-width="1.05"/><path d="M7 0.5 V2.1 H8.6" fill="none" stroke="#222" stroke-width="0.8"/><rect x="0.55" y="2.4" width="5.7" height="7.8" rx="0.8" fill="none" stroke="#222" stroke-width="1.05"/></svg>
<div class="t" style="left:350.3px;top:1086.08px;font-size:12px;line-height:14px;color:#111;font-weight:bold;-webkit-text-stroke:0;">a</div>
<svg style="left:348.5px;top:1097.08px" width="12" height="4" viewBox="0 0 12 4"><path d="M1 0.8 Q6 3.6 11 0.8" fill="none" stroke="#333" stroke-width="0.9"/></svg>
<div class="a" style="left:330.2px;top:1106.28px;width:41.4px;height:16px;border:1px solid #4286f5;border-radius:2.5px;background:#fff"></div>
<div class="t" style="left:330.2px;top:1107.28px;font-size:9px;line-height:14px;color:#3b7cf4;font-weight:normal;width:41.4px;text-align:center;-webkit-text-stroke:0.1px currentColor">卖家报告</div>
<div class="a" style="left:376.3px;top:1106.28px;width:41.4px;height:16px;border:1px solid #4286f5;border-radius:2.5px;background:#fff"></div>
<div class="t" style="left:376.3px;top:1107.28px;font-size:9px;line-height:14px;color:#3b7cf4;font-weight:normal;width:41.4px;text-align:center;-webkit-text-stroke:0.1px currentColor">业绩趋势</div>
<div class="a" style="left:422.3px;top:1106.28px;width:59px;height:16px;border:1px solid #4286f5;border-radius:2.5px;background:#fff"></div>
<div class="t" style="left:422.3px;top:1107.28px;font-size:9px;line-height:14px;color:#3b7cf4;font-weight:normal;width:59px;text-align:center;-webkit-text-stroke:0.1px currentColor">运营类目分析</div>
<div class="a" style="left:486.3px;top:1106.28px;width:58.7px;height:16px;border:1px solid #4286f5;border-radius:2.5px;background:#fff"></div>
<div class="t" style="left:486.3px;top:1107.28px;font-size:9px;line-height:14px;color:#3b7cf4;font-weight:normal;width:58.7px;text-align:center;-webkit-text-stroke:0.1px currentColor">分析卖家产品</div>
<div class="t" style="left:571px;top:1087.8799999999999px;font-size:10.5px;line-height:14px;color:#222;font-weight:normal;">2016-10-24</div>
<svg style="left:745.9px;top:1074.1799999999998px" width="14.3" height="14.3" viewBox="0 0 14.3 14.3"><clipPath id="cf9"><circle cx="7.15" cy="7.15" r="7.15"/></clipPath><g clip-path="url(#cf9)"><rect width="14.3" height="14.3" fill="#fff"/><rect y="0.00" width="14.3" height="1.10" fill="#d52b1e"/><rect y="2.20" width="14.3" height="1.10" fill="#d52b1e"/><rect y="4.40" width="14.3" height="1.10" fill="#d52b1e"/><rect y="6.60" width="14.3" height="1.10" fill="#d52b1e"/><rect y="8.80" width="14.3" height="1.10" fill="#d52b1e"/><rect y="11.00" width="14.3" height="1.10" fill="#d52b1e"/><rect y="13.20" width="14.3" height="1.10" fill="#d52b1e"/><rect width="6.44" height="7.70" fill="#3c3b6e"/></g></svg>
<div class="t" style="left:767.3px;top:1074.4799999999998px;font-size:10px;line-height:14px;color:#222;font-weight:normal;">美国</div>
<div class="t" style="left:746.5px;top:1094.4799999999998px;font-size:10.5px;line-height:14px;color:#666;font-weight:normal;"><span style="font-size:10px">公司：</span>Rarewaves-...</div>
<div class="t" style="left:920px;top:1087.8799999999999px;font-size:10.5px;line-height:14px;color:#222;font-weight:normal;">258892</div>
<div class="t" style="left:1077px;top:1087.8799999999999px;font-size:10.5px;line-height:14px;color:#222;font-weight:normal;">50</div>
<div class="t" style="left:1233.7px;top:1087.8799999999999px;font-size:10.5px;line-height:14px;color:#222;font-weight:normal;">57</div>
<div class="t" style="left:1341px;top:1087.8799999999999px;font-size:10.5px;line-height:14px;color:#222;font-weight:normal;">50</div>
<div class="t" style="left:1449px;top:1087.8799999999999px;font-size:10.5px;line-height:14px;color:#222;font-weight:normal;">0.02</div>
<div class="a" style="left:162.5px;top:1129.44px;width:1307.0px;height:66.56px;background:transparent;border-bottom:1px solid #e9ecf0"></div>
<div class="a" style="left:178.2px;top:1155.14px;width:12.2px;height:12.2px;background:#fff;border:1px solid #3f82f5;border-radius:2px"></div>
<div class="t" style="left:214px;top:1154.54px;font-size:10.5px;line-height:14px;color:#222;font-weight:normal;">11</div>
<svg style="left:300.9px;top:1161.74px" width="16" height="16" viewBox="0 0 16 16"><circle cx="8" cy="8" r="8" fill="#1a6ff2"/><rect x="4.6" y="4" width="6.8" height="8.2" rx="1" fill="none" stroke="#fff" stroke-width="1.1"/><path d="M6.3 6.6 H9.7 M6.3 9.8 H9.7" stroke="#fff" stroke-width="1"/></svg>
<div class="t" style="left:330px;top:1136.24px;font-size:10.5px;line-height:14px;color:#151515;font-weight:normal;">diythinker</div>
<svg style="left:332.8px;top:1155.8400000000001px" width="10" height="11" viewBox="0 0 10 11"><path d="M3.4 2.4 V1.2 Q3.4 0.5 4.1 0.5 H7 L8.6 2.1 V7.6 Q8.6 8.3 7.9 8.3 H6.4" fill="none" stroke="#222" stroke-width="1.05"/><path d="M7 0.5 V2.1 H8.6" fill="none" stroke="#222" stroke-width="0.8"/><rect x="0.55" y="2.4" width="5.7" height="7.8" rx="0.8" fill="none" stroke="#222" stroke-width="1.05"/></svg>
<div class="t" style="left:350.3px;top:1152.64px;font-size:12px;line-height:14px;color:#111;font-weight:bold;-webkit-text-stroke:0;">a</div>
<svg style="left:348.5px;top:1163.64px" width="12" height="4" viewBox="0 0 12 4"><path d="M1 0.8 Q6 3.6 11 0.8" fill="none" stroke="#333" stroke-width="0.9"/></svg>
<div class="a" style="left:330.2px;top:1172.8400000000001px;width:41.4px;height:16px;border:1px solid #4286f5;border-radius:2.5px;background:#fff"></div>
<div class="t" style="left:330.2px;top:1173.8400000000001px;font-size:9px;line-height:14px;color:#3b7cf4;font-weight:normal;width:41.4px;text-align:center;-webkit-text-stroke:0.1px currentColor">卖家报告</div>
<div class="a" style="left:376.3px;top:1172.8400000000001px;width:41.4px;height:16px;border:1px solid #4286f5;border-radius:2.5px;background:#fff"></div>
<div class="t" style="left:376.3px;top:1173.8400000000001px;font-size:9px;line-height:14px;color:#3b7cf4;font-weight:normal;width:41.4px;text-align:center;-webkit-text-stroke:0.1px currentColor">业绩趋势</div>
<div class="a" style="left:422.3px;top:1172.8400000000001px;width:59px;height:16px;border:1px solid #4286f5;border-radius:2.5px;background:#fff"></div>
<div class="t" style="left:422.3px;top:1173.8400000000001px;font-size:9px;line-height:14px;color:#3b7cf4;font-weight:normal;width:59px;text-align:center;-webkit-text-stroke:0.1px currentColor">运营类目分析</div>
<div class="a" style="left:486.3px;top:1172.8400000000001px;width:58.7px;height:16px;border:1px solid #4286f5;border-radius:2.5px;background:#fff"></div>
<div class="t" style="left:486.3px;top:1173.8400000000001px;font-size:9px;line-height:14px;color:#3b7cf4;font-weight:normal;width:58.7px;text-align:center;-webkit-text-stroke:0.1px currentColor">分析卖家产品</div>
<div class="t" style="left:571px;top:1154.44px;font-size:10.5px;line-height:14px;color:#222;font-weight:normal;">2017-04-03</div>
<svg style="left:745.9px;top:1140.74px" width="14.3" height="14.3" viewBox="0 0 14.3 14.3"><clipPath id="cf10"><circle cx="7.15" cy="7.15" r="7.15"/></clipPath><g clip-path="url(#cf10)"><rect width="14.3" height="14.3" fill="#e8251b"/><path d="M4 3 L4.6 4.6 L6.2 4.6 L4.9 5.6 L5.4 7.2 L4 6.2 L2.6 7.2 L3.1 5.6 L1.8 4.6 L3.4 4.6 Z" fill="#ffd200"/><circle cx="7.2" cy="2.8" r="0.55" fill="#ffd200"/><circle cx="8.2" cy="4.3" r="0.55" fill="#ffd200"/><circle cx="8.2" cy="6" r="0.55" fill="#ffd200"/><circle cx="7.2" cy="7.4" r="0.55" fill="#ffd200"/></g></svg>
<div class="t" style="left:767.3px;top:1141.04px;font-size:10px;line-height:14px;color:#222;font-weight:normal;">中国</div>
<div class="t" style="left:746.5px;top:1161.04px;font-size:10.5px;line-height:14px;color:#666;font-weight:normal;"><span style="font-size:10px">公司：</span>diythinker...</div>
<div class="t" style="left:920px;top:1154.44px;font-size:10.5px;line-height:14px;color:#222;font-weight:normal;">253963</div>
<div class="t" style="left:1077px;top:1154.44px;font-size:10.5px;line-height:14px;color:#222;font-weight:normal;">1</div>
<div class="t" style="left:1233.7px;top:1154.44px;font-size:10.5px;line-height:14px;color:#222;font-weight:normal;">13</div>
<div class="t" style="left:1341px;top:1154.44px;font-size:10.5px;line-height:14px;color:#222;font-weight:normal;">1</div>
<div class="t" style="left:1449px;top:1154.44px;font-size:10.5px;line-height:14px;color:#222;font-weight:normal;">0.01</div>
<div class="a" style="left:562.7px;top:400.5px;width:8px;height:800px;background:linear-gradient(to right,rgba(0,0,0,0.045),rgba(0,0,0,0))"></div>
</div>
<div class="a" style="left:1469.3px;top:400px;width:1.6px;height:800px;background:#d9d9d9"></div>
<div class="a" style="left:1442px;top:771.5px;width:36px;height:36px;background:#fff;border-radius:50%;box-shadow:0 1px 5px rgba(0,0,0,0.18)"></div>
<svg style="left:1451px;top:779px" width="20" height="20" viewBox="0 0 20 20"><defs><linearGradient id="lg2" x1="0" y1="0" x2="0" y2="1"><stop offset="0" stop-color="#9fd6ec"/><stop offset="1" stop-color="#39a9dc"/></linearGradient></defs>
<path d="M2.6 6.8 A7.2 7.2 0 0 1 13.5 3.8" fill="none" stroke="#2b4d7e" stroke-width="1.8" stroke-dasharray="2.6 1.3"/>
<path d="M1.8 9.8 A7.2 7.2 0 0 0 16 10" fill="none" stroke="url(#lg2)" stroke-width="1.8" stroke-dasharray="2.6 1.3"/>
<path d="M4.8 8.6 L8.6 12 L16.2 3.5" fill="none" stroke="#2b4d7e" stroke-width="1.8"/></svg>
</div>
<div class="bord"></div>
</body></html>
